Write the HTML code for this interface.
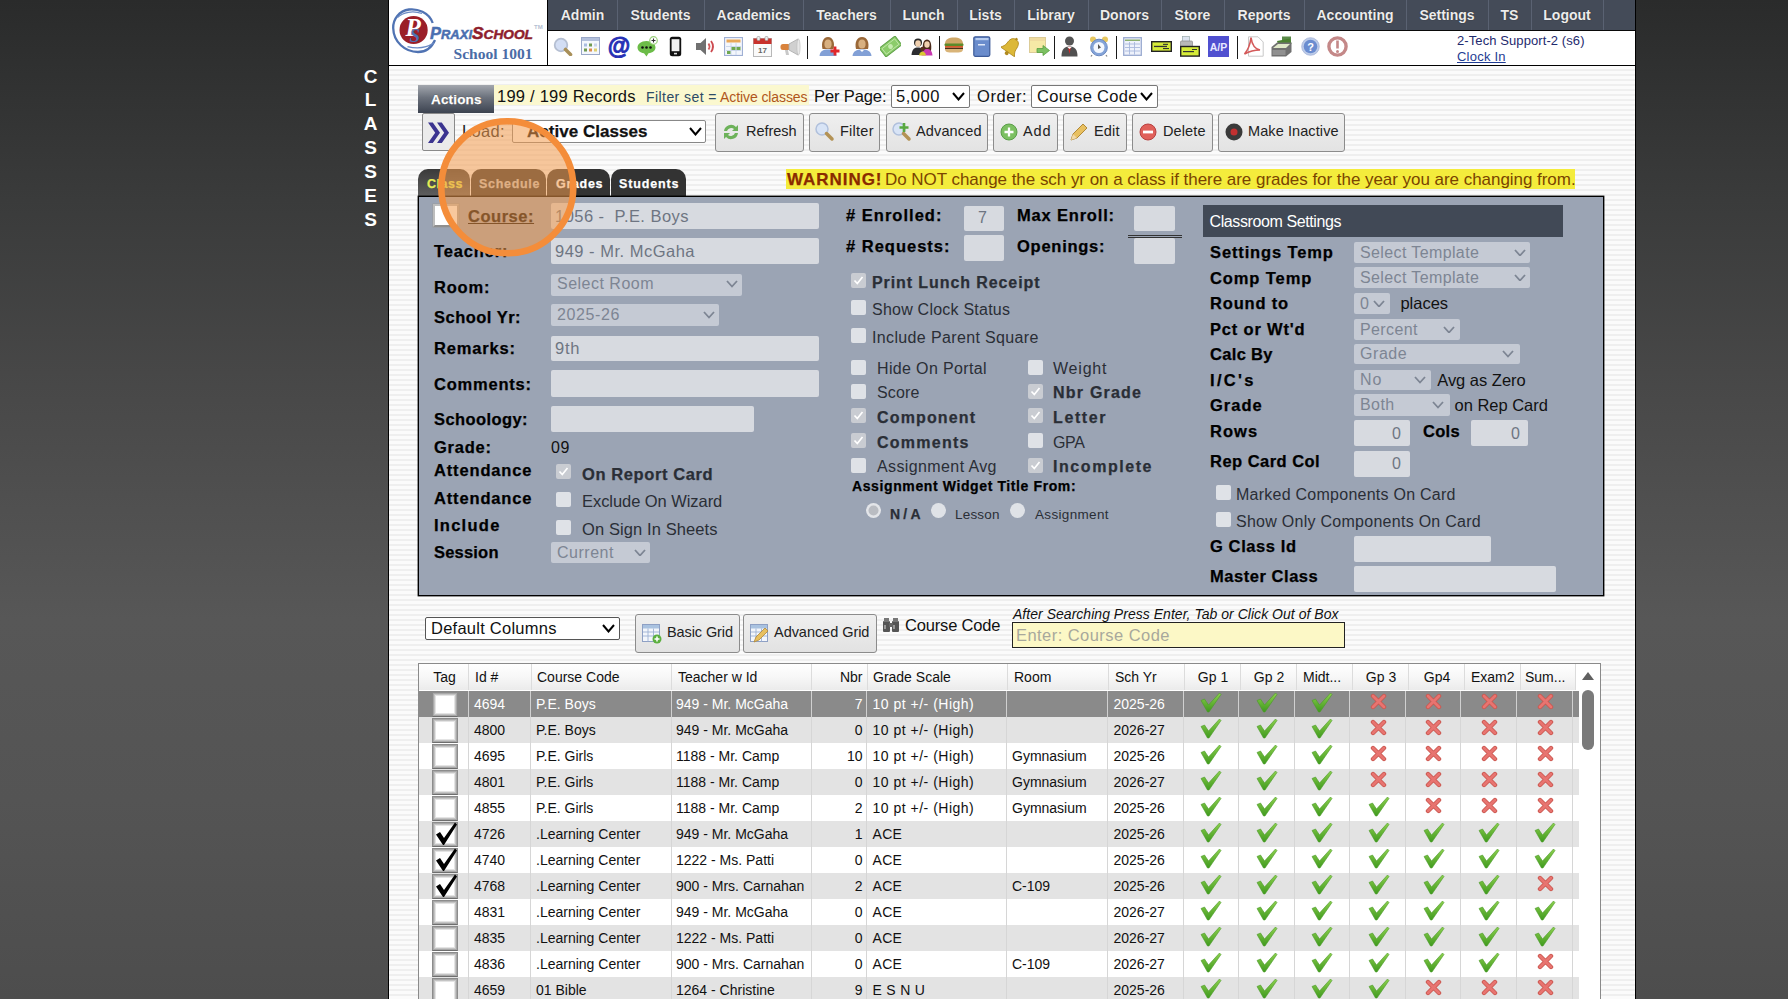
<!DOCTYPE html><html><head><meta charset="utf-8"><style>html,body{margin:0;padding:0;}body{width:1788px;height:999px;overflow:hidden;position:relative;background:linear-gradient(to bottom,#2a2b2b 0px,#3a3b3b 200px,#494949 400px,#575757 620px,#545454 800px,#4d4d4d 999px);font-family:'Liberation Sans', sans-serif;}</style></head><body>
<div style="position:absolute;left:388px;top:0px;width:1248px;height:999px;background:#000;"></div>
<div style="position:absolute;left:389px;top:66px;width:1246px;height:933px;background:repeating-linear-gradient(to bottom,#fbfbfb 0px,#fbfbfb 3px,#efefef 3px,#efefef 5px);"></div>
<div style="position:absolute;left:389px;top:0px;width:158px;height:65px;background:#fff;"></div>
<div style="position:absolute;left:547px;top:0px;width:1px;height:65px;background:#000;"></div>
<div style="position:absolute;left:548px;top:0px;width:1087px;height:30px;background:#444b58;"></div>
<div style="position:absolute;left:548px;top:30px;width:1087px;height:1px;background:#0a0a0a;"></div>
<div style="position:absolute;left:548px;top:31px;width:1087px;height:34px;background:#fff;"></div>
<div style="position:absolute;left:389px;top:65px;width:1246px;height:1px;background:#000;"></div>
<div style="position:absolute;left:355px;top:63.5px;width:31px;text-align:center;font:bold 19px/26px 'Liberation Sans', sans-serif;color:#fff;">C</div>
<div style="position:absolute;left:355px;top:87.3px;width:31px;text-align:center;font:bold 19px/26px 'Liberation Sans', sans-serif;color:#fff;">L</div>
<div style="position:absolute;left:355px;top:111.2px;width:31px;text-align:center;font:bold 19px/26px 'Liberation Sans', sans-serif;color:#fff;">A</div>
<div style="position:absolute;left:355px;top:135.0px;width:31px;text-align:center;font:bold 19px/26px 'Liberation Sans', sans-serif;color:#fff;">S</div>
<div style="position:absolute;left:355px;top:158.8px;width:31px;text-align:center;font:bold 19px/26px 'Liberation Sans', sans-serif;color:#fff;">S</div>
<div style="position:absolute;left:355px;top:182.6px;width:31px;text-align:center;font:bold 19px/26px 'Liberation Sans', sans-serif;color:#fff;">E</div>
<div style="position:absolute;left:355px;top:206.5px;width:31px;text-align:center;font:bold 19px/26px 'Liberation Sans', sans-serif;color:#fff;">S</div>
<div style="position:absolute;left:548px;top:0;width:69px;height:30px;text-align:center;font:bold 14px/30px 'Liberation Sans', sans-serif;color:#ececec;text-shadow:0 0 1px #222;">Admin</div>
<div style="position:absolute;left:617px;top:0px;width:1px;height:30px;background:#5a6272;"></div>
<div style="position:absolute;left:617px;top:0;width:87px;height:30px;text-align:center;font:bold 14px/30px 'Liberation Sans', sans-serif;color:#ececec;text-shadow:0 0 1px #222;">Students</div>
<div style="position:absolute;left:704px;top:0px;width:1px;height:30px;background:#5a6272;"></div>
<div style="position:absolute;left:704px;top:0;width:99px;height:30px;text-align:center;font:bold 14px/30px 'Liberation Sans', sans-serif;color:#ececec;text-shadow:0 0 1px #222;">Academics</div>
<div style="position:absolute;left:803px;top:0px;width:1px;height:30px;background:#5a6272;"></div>
<div style="position:absolute;left:803px;top:0;width:87px;height:30px;text-align:center;font:bold 14px/30px 'Liberation Sans', sans-serif;color:#ececec;text-shadow:0 0 1px #222;">Teachers</div>
<div style="position:absolute;left:890px;top:0px;width:1px;height:30px;background:#5a6272;"></div>
<div style="position:absolute;left:890px;top:0;width:67px;height:30px;text-align:center;font:bold 14px/30px 'Liberation Sans', sans-serif;color:#ececec;text-shadow:0 0 1px #222;">Lunch</div>
<div style="position:absolute;left:957px;top:0px;width:1px;height:30px;background:#5a6272;"></div>
<div style="position:absolute;left:957px;top:0;width:57px;height:30px;text-align:center;font:bold 14px/30px 'Liberation Sans', sans-serif;color:#ececec;text-shadow:0 0 1px #222;">Lists</div>
<div style="position:absolute;left:1014px;top:0px;width:1px;height:30px;background:#5a6272;"></div>
<div style="position:absolute;left:1014px;top:0;width:74px;height:30px;text-align:center;font:bold 14px/30px 'Liberation Sans', sans-serif;color:#ececec;text-shadow:0 0 1px #222;">Library</div>
<div style="position:absolute;left:1088px;top:0px;width:1px;height:30px;background:#5a6272;"></div>
<div style="position:absolute;left:1088px;top:0;width:73px;height:30px;text-align:center;font:bold 14px/30px 'Liberation Sans', sans-serif;color:#ececec;text-shadow:0 0 1px #222;">Donors</div>
<div style="position:absolute;left:1161px;top:0px;width:1px;height:30px;background:#5a6272;"></div>
<div style="position:absolute;left:1161px;top:0;width:63px;height:30px;text-align:center;font:bold 14px/30px 'Liberation Sans', sans-serif;color:#ececec;text-shadow:0 0 1px #222;">Store</div>
<div style="position:absolute;left:1224px;top:0px;width:1px;height:30px;background:#5a6272;"></div>
<div style="position:absolute;left:1224px;top:0;width:80px;height:30px;text-align:center;font:bold 14px/30px 'Liberation Sans', sans-serif;color:#ececec;text-shadow:0 0 1px #222;">Reports</div>
<div style="position:absolute;left:1304px;top:0px;width:1px;height:30px;background:#5a6272;"></div>
<div style="position:absolute;left:1304px;top:0;width:102px;height:30px;text-align:center;font:bold 14px/30px 'Liberation Sans', sans-serif;color:#ececec;text-shadow:0 0 1px #222;">Accounting</div>
<div style="position:absolute;left:1406px;top:0px;width:1px;height:30px;background:#5a6272;"></div>
<div style="position:absolute;left:1406px;top:0;width:82px;height:30px;text-align:center;font:bold 14px/30px 'Liberation Sans', sans-serif;color:#ececec;text-shadow:0 0 1px #222;">Settings</div>
<div style="position:absolute;left:1488px;top:0px;width:1px;height:30px;background:#5a6272;"></div>
<div style="position:absolute;left:1488px;top:0;width:43px;height:30px;text-align:center;font:bold 14px/30px 'Liberation Sans', sans-serif;color:#ececec;text-shadow:0 0 1px #222;">TS</div>
<div style="position:absolute;left:1531px;top:0px;width:1px;height:30px;background:#5a6272;"></div>
<div style="position:absolute;left:1531px;top:0;width:72px;height:30px;text-align:center;font:bold 14px/30px 'Liberation Sans', sans-serif;color:#ececec;text-shadow:0 0 1px #222;">Logout</div>
<div style="position:absolute;left:1603px;top:0px;width:1px;height:30px;background:#5a6272;"></div>
<svg style="position:absolute;left:389px;top:0px;" width="158" height="65" viewBox="0 0 158 65">
<path d="M 43.7 23 C 40 12, 28 8.5, 20 9.5 C 10 11, 4 19, 4.2 28 C 4.5 42, 16 52, 29 52 C 37 52, 43 47, 46 40" fill="none" stroke="#5073b3" stroke-width="2.3"/>
<path d="M 8.4 17.5 C 14 12, 24 10.5, 33 13.5" fill="none" stroke="#6a8ac4" stroke-width="1.3"/>
<path d="M 18.5 46.6 C 28 49, 38 47.5, 44.8 43.2" fill="none" stroke="#6a8ac4" stroke-width="1.4"/>
<circle cx="24.6" cy="30" r="14.1" fill="#9b1f28"/>
<text x="16.5" y="35.5" font-family="Liberation Serif" font-style="italic" font-weight="bold" font-size="25" fill="#fff">P</text>
<text x="20.5" y="41.5" font-family="Liberation Serif" font-style="italic" font-weight="bold" font-size="19" fill="#4f72b3">S</text>
<text x="41" y="38.5" font-family="Liberation Sans" font-style="italic" font-weight="bold" font-size="16.5" fill="#4a6fb0" stroke="#4a6fb0" stroke-width="0.5" textLength="42" lengthAdjust="spacingAndGlyphs">P<tspan font-size="13">RAXI</tspan></text>
<text x="83" y="38.5" font-family="Liberation Sans" font-style="italic" font-weight="bold" font-size="16.5" fill="#8e1d2c" stroke="#8e1d2c" stroke-width="0.5" textLength="61" lengthAdjust="spacingAndGlyphs">S<tspan font-size="13">CHOOL</tspan></text>
<text x="145" y="29" font-family="Liberation Sans" font-weight="bold" font-size="6" fill="#b4c0d2">TM</text>
<text x="64.5" y="59" font-family="Liberation Serif" font-weight="bold" font-size="14.5" fill="#4b6ca6" textLength="79" lengthAdjust="spacingAndGlyphs">School 1001</text>
</svg>
<svg style="position:absolute;left:553px;top:37px;" width="20" height="19" viewBox="0 0 20 19"><circle cx="8" cy="8" r="6.3" fill="#d3def4" stroke="#b5bfd2" stroke-width="1.8"/><path d="M12.5 12.5 L17.5 17.5" stroke="#a88f58" stroke-width="3.6" stroke-linecap="round"/></svg>
<svg style="position:absolute;left:581px;top:37px;" width="19" height="19" viewBox="0 0 19 19"><rect x="0.5" y="0.5" width="18" height="17" fill="#f4f7fc" stroke="#9aa8c8"/><rect x="1" y="1" width="17" height="3" fill="#b3c0dc"/><rect x="3" y="6.5" width="3" height="3" fill="#a9bde0"/><rect x="8" y="6.5" width="3" height="3" fill="#6f9a50"/><rect x="13" y="6.5" width="3" height="3" fill="#c9d3ea"/><rect x="3" y="11.5" width="3" height="3" fill="#6f9a50"/><rect x="8" y="11.5" width="3" height="3" fill="#dc8c50"/><rect x="13" y="11.5" width="3" height="3" fill="#dcd070"/></svg>
<svg style="position:absolute;left:608px;top:35px;" width="22" height="23" viewBox="0 0 22 23"><text x="11" y="18.5" text-anchor="middle" font-family="Liberation Sans" font-weight="bold" font-size="23" fill="#2630b5" stroke="#2630b5" stroke-width="0.9">@</text></svg>
<svg style="position:absolute;left:637px;top:36px;" width="21" height="21" viewBox="0 0 21 21"><path d="M9.5 5 C4 5 0.5 8 0.5 11.5 C0.5 14.5 3 16.5 7 17.2 L9.5 20.5 L11.5 17.2 C16 16.8 18.5 14.5 18.5 11.5 C18.5 8 15 5 9.5 5z" fill="#6cbc48"/><circle cx="5.5" cy="11.5" r="1.3" fill="#111"/><circle cx="9.5" cy="11.5" r="1.3" fill="#111"/><circle cx="13.5" cy="11.5" r="1.3" fill="#111"/><circle cx="16.5" cy="4.5" r="3.8" fill="#fff" stroke="#9ad07a" stroke-width="1.2"/><path d="M16.5 2.5v4M14.5 4.5h4" stroke="#333" stroke-width="1.1"/></svg>
<svg style="position:absolute;left:669px;top:36px;" width="13" height="21" viewBox="0 0 13 21"><rect x="0.8" y="0.8" width="11.4" height="19.4" rx="2.5" fill="#111"/><rect x="2.6" y="3.2" width="7.8" height="12" fill="#f2f2f2"/><rect x="5" y="16.8" width="3" height="1.6" fill="#ddd"/></svg>
<svg style="position:absolute;left:695px;top:37px;" width="22" height="19" viewBox="0 0 22 19"><path d="M1 6h4.5L11 1v17L5.5 13H1z" fill="#707070"/><path d="M13.5 6.5 q2 3 0 6" fill="none" stroke="#d05a5a" stroke-width="1.8"/><path d="M16 4 q4 5.5 0 11" fill="none" stroke="#cc4a50" stroke-width="1.8"/></svg>
<svg style="position:absolute;left:724px;top:37px;" width="19" height="19" viewBox="0 0 19 19"><rect x="0.5" y="0.5" width="18" height="18" fill="#f4f7fc" stroke="#9fb0d4" stroke-width="1.2"/><rect x="2.5" y="2.5" width="14" height="3" fill="#e9a858"/><path d="M2 9.5h15M2 13.5h15M7 6v12M12 6v12" stroke="#c8d4ea" stroke-width="0.9"/><rect x="7.5" y="10" width="4" height="3" fill="#6fa850"/><rect x="3" y="14" width="3.5" height="3" fill="#6fa850"/><rect x="12.5" y="10" width="4" height="3" fill="#6fa850"/></svg>
<svg style="position:absolute;left:753px;top:36px;" width="19" height="21" viewBox="0 0 19 21"><rect x="0.5" y="2.5" width="18" height="18" fill="#fafafa" stroke="#b8b8b8"/><rect x="0.5" y="2.5" width="18" height="5.5" fill="#c8322c"/><rect x="4" y="0.5" width="3" height="4" rx="1" fill="#eee" stroke="#999" stroke-width="0.6"/><rect x="12" y="0.5" width="3" height="4" rx="1" fill="#eee" stroke="#999" stroke-width="0.6"/><text x="9.5" y="17" text-anchor="middle" font-family="Liberation Sans" font-weight="bold" font-size="8" fill="#666">17</text></svg>
<svg style="position:absolute;left:780px;top:38px;" width="21" height="19" viewBox="0 0 21 19"><rect x="0.5" y="6" width="10" height="6" rx="2.5" fill="#d9833c"/><path d="M9 6 L18 1 Q20.5 9 18 17 L9 12z" fill="#d0d0d0" stroke="#aaa" stroke-width="0.8"/><ellipse cx="18.5" cy="9" rx="1.6" ry="8" fill="#e8e8e8" stroke="#bbb" stroke-width="0.6"/><path d="M5 12 L6 17 L9 17 L8 12z" fill="#c8c8c8"/></svg>
<svg style="position:absolute;left:819px;top:36px;" width="21" height="21" viewBox="0 0 21 21"><path d="M3.5 13 C2 7 4 1 9 1 C14 1 16 7 14.5 13z" fill="#9a6838"/><ellipse cx="9" cy="8" rx="3.6" ry="4.5" fill="#d8b080"/><path d="M0.5 20 C1 15 4 13.5 9 13.5 C14 13.5 17 15 17.5 20z" fill="#82a0d6"/><path d="M16 10.5v9M11.5 15h9" stroke="#e0262a" stroke-width="2.8"/></svg>
<svg style="position:absolute;left:852px;top:36px;" width="20" height="21" viewBox="0 0 20 21"><path d="M4 13 C2.5 7 4.5 1 10 1 C15.5 1 17.5 7 16 13z" fill="#9a6838"/><ellipse cx="10" cy="8" rx="3.6" ry="4.5" fill="#d8b080"/><path d="M0.5 20 C1 15 4.5 13.5 10 13.5 C15.5 13.5 19 15 19.5 20z" fill="#82a0d6"/><path d="M8 14 L10 16 L12 14" fill="#fff"/></svg>
<svg style="position:absolute;left:880px;top:36px;" width="21" height="21" viewBox="0 0 21 21"><g transform="rotate(-38 10.5 10.5)"><rect x="0.5" y="5" width="20" height="11" fill="#8ccc6a" stroke="#5fa048" stroke-width="1"/><rect x="2.5" y="7" width="16" height="7" fill="none" stroke="#c6eab0" stroke-width="0.8"/><circle cx="10.5" cy="10.5" r="2.4" fill="#c6eab0"/></g></svg>
<svg style="position:absolute;left:911px;top:37px;" width="22" height="19" viewBox="0 0 22 19"><circle cx="7" cy="5.5" r="4" fill="#2a2a2a"/><ellipse cx="7" cy="6.5" rx="2.8" ry="3.2" fill="#f0d0b0"/><path d="M0.5 18 C1 12 3.5 10.5 7 10.5 C10 10.5 12 12 12.5 18z" fill="#2c2c30"/><path d="M12 14 C11 6 13 2.5 16 2.5 C19 2.5 21 6 20 14z" fill="#4a2a1a"/><ellipse cx="16" cy="7.5" rx="2.7" ry="3.2" fill="#f0d0b0"/><path d="M10.5 18.5 C11 13.5 13 12 16 12 C19 12 21 13.5 21.5 18.5z" fill="#c838b0"/><circle cx="11.5" cy="12" r="2.2" fill="#5a3020"/><path d="M8 18.5 C8.5 15.5 10 14.5 11.5 14.5 C13 14.5 14.5 15.5 15 18.5z" fill="#d8c830"/></svg>
<svg style="position:absolute;left:944px;top:37px;" width="20" height="16" viewBox="0 0 20 16"><path d="M1 7 C1 2 5 0.5 10 0.5 C15 0.5 19 2 19 7z" fill="#cfa868"/><rect x="0.5" y="6.5" width="19" height="2.5" rx="1" fill="#5c8a2a"/><rect x="1" y="9" width="18" height="1.8" fill="#d85a2a"/><rect x="1" y="10.8" width="18" height="1.6" fill="#4a3018"/><path d="M1 12 H19 C19 15 17 15.5 10 15.5 C3 15.5 1 15 1 12z" fill="#d9b478"/></svg>
<svg style="position:absolute;left:973px;top:36px;" width="18" height="21" viewBox="0 0 18 21"><rect x="0.8" y="0.8" width="16" height="19.5" rx="1.5" fill="#6a8ccc" stroke="#3c5a98" stroke-width="1.2"/><rect x="2.5" y="2" width="13" height="2.2" fill="#b8cdf0"/><rect x="5" y="8" width="7" height="1.5" fill="#dfe8f8"/></svg>
<svg style="position:absolute;left:1001px;top:36px;" width="20" height="21" viewBox="0 0 20 21"><g transform="rotate(35 10 11)"><path d="M10 2 C5.5 2 4.5 6 4.5 10 C4.5 13 3 15 1.5 17 H18.5 C17 15 15.5 13 15.5 10 C15.5 6 14.5 2 10 2z" fill="#dcb838" stroke="#b08a20" stroke-width="0.8"/><circle cx="10" cy="18.5" r="2" fill="#b08a20"/><circle cx="10" cy="1.5" r="1.3" fill="#b08a20"/></g></svg>
<svg style="position:absolute;left:1029px;top:37px;" width="21" height="20" viewBox="0 0 21 20"><rect x="0.5" y="0.5" width="16" height="15" fill="#f6e9a6" stroke="#d9c891" stroke-width="0.9"/><rect x="1" y="1" width="15" height="3" fill="#f0dca0"/><path d="M8 11.5h6v-3l6.5 5-6.5 5v-3h-6z" fill="#7cc062" stroke="#58a040" stroke-width="0.8"/></svg>
<svg style="position:absolute;left:1061px;top:36px;" width="17" height="21" viewBox="0 0 17 21"><circle cx="8.5" cy="5" r="4.5" fill="#555"/><path d="M0.5 20.5 C0.5 13 3.5 10.5 8.5 10.5 C13.5 10.5 16.5 13 16.5 20.5z" fill="#505050"/><path d="M7 10.8 L8.5 18 L10 10.8z" fill="#d02828"/><path d="M6 10.8 L8.5 13 L11 10.8" fill="#fff"/></svg>
<svg style="position:absolute;left:1089px;top:36px;" width="20" height="21" viewBox="0 0 20 21"><circle cx="4" cy="3.5" r="3" fill="#e8c860"/><circle cx="16" cy="3.5" r="3" fill="#e8c860"/><circle cx="10" cy="11.5" r="8.3" fill="#84a4d8" stroke="#6a88c0" stroke-width="1"/><circle cx="10" cy="11.5" r="5.5" fill="#f4f8ff"/><path d="M9 8 L12 11.5 L9 13z" fill="#555"/><path d="M3 19 L2 20.5 M17 19 L18 20.5" stroke="#888" stroke-width="1.3"/></svg>
<svg style="position:absolute;left:1123px;top:37px;" width="19" height="19" viewBox="0 0 19 19"><rect x="0.7" y="0.7" width="17.6" height="17.6" fill="#eef2fb" stroke="#9aaad0" stroke-width="1.3"/><rect x="2" y="2.5" width="15" height="1.5" fill="#8cb070"/><path d="M2 7h15M2 10.5h15M2 14h15M6.5 5v12.5M11.5 5v12.5" stroke="#a8b8dc" stroke-width="0.9"/></svg>
<svg style="position:absolute;left:1151px;top:41px;" width="21" height="11" viewBox="0 0 21 11"><rect x="0.7" y="0.7" width="19.6" height="9.6" fill="#d6ec38" stroke="#222" stroke-width="1.4"/><rect x="3" y="4.8" width="13" height="1.3" fill="#333"/><rect x="12" y="2.8" width="5" height="1.1" fill="#333"/><rect x="12" y="7" width="6" height="1.1" fill="#333"/></svg>
<svg style="position:absolute;left:1180px;top:36px;" width="20" height="21" viewBox="0 0 20 21"><rect x="2.5" y="0.5" width="7" height="6" fill="#dde4f0" stroke="#9aa" stroke-width="0.7"/><rect x="0.5" y="5" width="12" height="8" rx="1" fill="#b8b8b8" stroke="#888" stroke-width="0.7"/><rect x="0.7" y="10.5" width="18.6" height="9.6" fill="#d6ec38" stroke="#222" stroke-width="1.4"/><rect x="3" y="15" width="11" height="1.2" fill="#333"/><rect x="12" y="13" width="5" height="1" fill="#333"/></svg>
<svg style="position:absolute;left:1208px;top:36px;" width="21" height="21" viewBox="0 0 21 21"><rect x="0" y="0" width="21" height="21" fill="#5050d0"/><text x="10.5" y="15" text-anchor="middle" font-family="Liberation Sans" font-weight="bold" font-size="10.5" fill="#e8e8ff">A/P</text></svg>
<svg style="position:absolute;left:1243px;top:36px;" width="21" height="21" viewBox="0 0 21 21"><path d="M5.5 0.8 H15 L20.2 6 V20.2 H5.5z" fill="#fff" stroke="#c8c8c8" stroke-width="1"/><path d="M1.5 18 C5 14 7 10 8 1.5 C9 9 12 13 17 14 C11 14 6 15.5 1.5 18z" fill="none" stroke="#d45a5a" stroke-width="1.6"/></svg>
<svg style="position:absolute;left:1271px;top:36px;" width="21" height="21" viewBox="0 0 21 21"><rect x="11" y="0.5" width="9" height="6" fill="#5a8a4a"/><path d="M6 5 L19 2.5 L20.5 8 L7.5 10z" fill="#4a8030"/><path d="M0.5 11 L6 6.5 H20.5 V16 L15 20.5 H0.5z" fill="#707070"/><path d="M2 12 L7 8 H19 L15 12z" fill="#dfe8c8"/><rect x="1.5" y="14" width="13" height="5" fill="#909090"/></svg>
<svg style="position:absolute;left:1301px;top:37px;" width="19" height="19" viewBox="0 0 19 19"><circle cx="9.5" cy="9.5" r="8.8" fill="#bccbe8" stroke="#a4b4d8" stroke-width="0.8"/><circle cx="9.5" cy="9.5" r="6.8" fill="#6a8cd0"/><text x="9.5" y="13.5" text-anchor="middle" font-family="Liberation Sans" font-weight="bold" font-size="11" fill="#fff">?</text></svg>
<svg style="position:absolute;left:1327px;top:36px;" width="21" height="21" viewBox="0 0 21 21"><circle cx="10.5" cy="10.5" r="8.6" fill="#fff" stroke="#c48888" stroke-width="3.4"/><rect x="9.2" y="4.5" width="2.6" height="8" fill="#c48888"/><circle cx="10.5" cy="15.5" r="1.5" fill="#c48888"/></svg>
<div style="position:absolute;left:939px;top:36px;width:1px;height:23px;background:#1a1a1a;"></div>
<div style="position:absolute;left:1054px;top:36px;width:1px;height:23px;background:#1a1a1a;"></div>
<div style="position:absolute;left:1116px;top:36px;width:1px;height:23px;background:#1a1a1a;"></div>
<div style="position:absolute;left:1237px;top:36px;width:1px;height:23px;background:#1a1a1a;"></div>
<div style="position:absolute;left:807px;top:36px;width:1px;height:23px;background:#1a1a1a;"></div>
<div id="t0" style="position:absolute;left:1457px;top:32.5px;white-space:nowrap;font:normal 13px/16px 'Liberation Sans', sans-serif;color:#1e2a6e;letter-spacing:0.09px;">2-Tech Support-2 (s6)</div>
<div id="t1" style="position:absolute;left:1457px;top:48.5px;white-space:nowrap;font:normal 13px/16px 'Liberation Sans', sans-serif;color:#1f3c93;letter-spacing:0.22px;text-decoration:underline;">Clock In</div>
<div style="position:absolute;left:418px;top:85px;width:76px;height:28px;background:linear-gradient(to bottom,#a3a7ae 0%,#6b717c 45%,#3c4350 100%);"></div>
<div id="t2" style="position:absolute;left:431px;top:91.0px;white-space:nowrap;font:bold 13.5px/17px 'Liberation Sans', sans-serif;color:#fff;letter-spacing:0.16px;-webkit-text-stroke:0.25px currentColor;text-shadow:0 0 1px #222;">Actions</div>
<div style="position:absolute;left:494px;top:85px;width:315px;height:20px;background:#fbf8cf;"></div>
<div id="t3" style="position:absolute;left:497px;top:85.5px;white-space:nowrap;font:normal 16.5px/21px 'Liberation Sans', sans-serif;color:#111;letter-spacing:0.23px;">199 / 199 Records</div>
<div id="t4" style="position:absolute;left:646px;top:87.5px;white-space:nowrap;font:normal 14px/18px 'Liberation Sans', sans-serif;color:#2c4a66;letter-spacing:0.43px;">Filter set =</div>
<div id="t5" style="position:absolute;left:720px;top:87.5px;white-space:nowrap;font:normal 14px/18px 'Liberation Sans', sans-serif;color:#b0561c;letter-spacing:-0.09px;">Active classes</div>
<div id="t6" style="position:absolute;left:814px;top:85.5px;white-space:nowrap;font:normal 16.5px/21px 'Liberation Sans', sans-serif;color:#111;letter-spacing:-0.11px;">Per Page:</div>
<div style="position:absolute;left:891px;top:85px;width:79px;height:23px;box-sizing:border-box;background:#fff;border:1px solid #777;border-radius:2px;"></div>
<div id="t7" style="position:absolute;left:896px;top:86.0px;white-space:nowrap;font:normal 16.5px/21px 'Liberation Sans', sans-serif;color:#111;letter-spacing:0.55px;">5,000</div>
<svg style="position:absolute;left:952px;top:92px" width="13" height="8.5"><path d="M1 1 L6.5 7.5 L12 1" fill="none" stroke="#000" stroke-width="2"/></svg>
<div id="t8" style="position:absolute;left:977px;top:85.5px;white-space:nowrap;font:normal 16.5px/21px 'Liberation Sans', sans-serif;color:#111;letter-spacing:0.55px;">Order:</div>
<div style="position:absolute;left:1031px;top:85px;width:127px;height:23px;box-sizing:border-box;background:#fff;border:1px solid #777;border-radius:2px;"></div>
<div id="t9" style="position:absolute;left:1037px;top:86.0px;white-space:nowrap;font:normal 16.5px/21px 'Liberation Sans', sans-serif;color:#111;letter-spacing:0.33px;">Course Code</div>
<svg style="position:absolute;left:1140px;top:92px" width="13" height="8.5"><path d="M1 1 L6.5 7.5 L12 1" fill="none" stroke="#000" stroke-width="2"/></svg>
<div style="position:absolute;left:422px;top:113px;width:33px;height:38px;box-sizing:border-box;background:#ebebeb;border:1px solid #8a8a8a;border-radius:2px;"></div>
<svg style="position:absolute;left:427px;top:121px;" width="26" height="24" viewBox="0 0 26 24"><path d="M1 1.5 L5.8 1.5 L13 11.8 L5.8 22 L1 22 L8.2 11.8z" fill="#3b3490"/><path d="M10 1.5 L14.8 1.5 L22 11.8 L14.8 22 L10 22 L17.2 11.8z" fill="#3b3490"/></svg>
<div id="t10" style="position:absolute;left:462px;top:120.5px;white-space:nowrap;font:normal 16.5px/21px 'Liberation Sans', sans-serif;color:#222;letter-spacing:0.30px;">Load:</div>
<div style="position:absolute;left:512px;top:120px;width:194px;height:23px;box-sizing:border-box;background:#fff;border:1px solid #888;border-radius:2px;"></div>
<div id="t11" style="position:absolute;left:527px;top:121.0px;white-space:nowrap;font:bold 17px/21px 'Liberation Sans', sans-serif;color:#111;letter-spacing:0.04px;-webkit-text-stroke:0.25px currentColor;">Active Classes</div>
<svg style="position:absolute;left:689px;top:127px" width="13" height="8.5"><path d="M1 1 L6.5 7.5 L12 1" fill="none" stroke="#000" stroke-width="2"/></svg>
<div style="position:absolute;left:715px;top:113px;width:89px;height:39px;box-sizing:border-box;background:linear-gradient(#efefef,#e3e3e3);border:1px solid #8c8c8c;border-radius:3px;"></div>
<div id="t12" style="position:absolute;left:746px;top:122.0px;white-space:nowrap;font:normal 14.5px/18px 'Liberation Sans', sans-serif;color:#222;letter-spacing:-0.05px;">Refresh</div>
<svg style="position:absolute;left:720px;top:121px;" width="22" height="22" viewBox="0 0 22 22"><path d="M4 10 a7 7 0 0 1 12-4 l2-2 v6 h-6 l2-2 a4.5 4.5 0 0 0-7 2z" fill="#6db25a"/><path d="M18 12 a7 7 0 0 1-12 4 l-2 2 v-6 h6 l-2 2 a4.5 4.5 0 0 0 7-2z" fill="#6db25a"/></svg>
<div style="position:absolute;left:809px;top:113px;width:71px;height:39px;box-sizing:border-box;background:linear-gradient(#efefef,#e3e3e3);border:1px solid #8c8c8c;border-radius:3px;"></div>
<div id="t13" style="position:absolute;left:840px;top:122.0px;white-space:nowrap;font:normal 14.5px/18px 'Liberation Sans', sans-serif;color:#222;letter-spacing:0.25px;">Filter</div>
<svg style="position:absolute;left:814px;top:121px;" width="22" height="22" viewBox="0 0 22 22"><circle cx="8" cy="8" r="6" fill="#d8e4f6" stroke="#b0c0dc" stroke-width="1.5"/><path d="M12.5 12.5 L18 18" stroke="#b39255" stroke-width="3.5" stroke-linecap="round"/></svg>
<div style="position:absolute;left:886px;top:113px;width:102px;height:39px;box-sizing:border-box;background:linear-gradient(#efefef,#e3e3e3);border:1px solid #8c8c8c;border-radius:3px;"></div>
<div id="t14" style="position:absolute;left:916px;top:122.0px;white-space:nowrap;font:normal 14.5px/18px 'Liberation Sans', sans-serif;color:#222;letter-spacing:0.14px;">Advanced</div>
<svg style="position:absolute;left:891px;top:121px;" width="22" height="22" viewBox="0 0 22 22"><circle cx="8" cy="8" r="6" fill="#d8e4f6" stroke="#b0c0dc" stroke-width="1.5"/><path d="M12.5 12.5 L18 18" stroke="#b39255" stroke-width="3.5" stroke-linecap="round"/><path d="M13 2v9M8.5 6.5h9" stroke="#58a840" stroke-width="2.6"/></svg>
<div style="position:absolute;left:993px;top:113px;width:65px;height:39px;box-sizing:border-box;background:linear-gradient(#efefef,#e3e3e3);border:1px solid #8c8c8c;border-radius:3px;"></div>
<div id="t15" style="position:absolute;left:1023px;top:122.0px;white-space:nowrap;font:normal 14.5px/18px 'Liberation Sans', sans-serif;color:#222;letter-spacing:0.84px;">Add</div>
<svg style="position:absolute;left:999px;top:122px;" width="22" height="22" viewBox="0 0 22 22"><circle cx="10" cy="10" r="8" fill="#7cc062" stroke="#5a9e48"/><path d="M10 5.5v9M5.5 10h9" stroke="#fff" stroke-width="2.3"/></svg>
<div style="position:absolute;left:1063px;top:113px;width:64px;height:39px;box-sizing:border-box;background:linear-gradient(#efefef,#e3e3e3);border:1px solid #8c8c8c;border-radius:3px;"></div>
<div id="t16" style="position:absolute;left:1094px;top:122.0px;white-space:nowrap;font:normal 14.5px/18px 'Liberation Sans', sans-serif;color:#222;letter-spacing:0.17px;">Edit</div>
<svg style="position:absolute;left:1068px;top:121px;" width="22" height="22" viewBox="0 0 22 22"><path d="M3 19 L5 13 L15 3 L19 7 L9 17z" fill="#e8c060" stroke="#b08838" stroke-width="1"/><path d="M3 19 L5 13 L9 17z" fill="#f0d8a8"/></svg>
<div style="position:absolute;left:1132px;top:113px;width:81px;height:39px;box-sizing:border-box;background:linear-gradient(#efefef,#e3e3e3);border:1px solid #8c8c8c;border-radius:3px;"></div>
<div id="t17" style="position:absolute;left:1163px;top:122.0px;white-space:nowrap;font:normal 14.5px/18px 'Liberation Sans', sans-serif;color:#222;letter-spacing:0.12px;">Delete</div>
<svg style="position:absolute;left:1138px;top:122px;" width="22" height="22" viewBox="0 0 22 22"><circle cx="10" cy="10" r="8" fill="#e0605a" stroke="#b84040"/><rect x="5" y="8.6" width="10" height="2.8" fill="#fff"/></svg>
<div style="position:absolute;left:1218px;top:113px;width:127px;height:39px;box-sizing:border-box;background:linear-gradient(#efefef,#e3e3e3);border:1px solid #8c8c8c;border-radius:3px;"></div>
<div id="t18" style="position:absolute;left:1248px;top:122.0px;white-space:nowrap;font:normal 14.5px/18px 'Liberation Sans', sans-serif;color:#222;letter-spacing:0.09px;">Make Inactive</div>
<svg style="position:absolute;left:1224px;top:122px;" width="22" height="22" viewBox="0 0 22 22"><circle cx="10" cy="10" r="8.5" fill="#3a3a3a"/><circle cx="10" cy="10" r="3.5" fill="#c23030"/></svg>
<div style="position:absolute;left:418px;top:169px;width:52px;height:27px;background:linear-gradient(to bottom,#3a3a3a,#5e5e5e);border-radius:10px 10px 0 0;"></div>
<div id="t19" style="position:absolute;left:427px;top:175.5px;white-space:nowrap;font:bold 12.5px/16px 'Liberation Sans', sans-serif;color:#e6ee55;letter-spacing:0.54px;-webkit-text-stroke:0.25px currentColor;">Class</div>
<div style="position:absolute;left:471px;top:169px;width:75px;height:27px;background:#333;border-radius:10px 10px 0 0;"></div>
<div id="t20" style="position:absolute;left:479px;top:175.5px;white-space:nowrap;font:bold 12.5px/16px 'Liberation Sans', sans-serif;color:#c8c8c8;letter-spacing:0.70px;-webkit-text-stroke:0.25px currentColor;">Schedule</div>
<div style="position:absolute;left:547px;top:169px;width:63px;height:27px;background:#333;border-radius:10px 10px 0 0;"></div>
<div id="t21" style="position:absolute;left:556px;top:175.5px;white-space:nowrap;font:bold 12.5px/16px 'Liberation Sans', sans-serif;color:#fff;letter-spacing:0.68px;-webkit-text-stroke:0.25px currentColor;">Grades</div>
<div style="position:absolute;left:611px;top:169px;width:75px;height:27px;background:#333;border-radius:10px 10px 0 0;"></div>
<div id="t22" style="position:absolute;left:619px;top:175.5px;white-space:nowrap;font:bold 12.5px/16px 'Liberation Sans', sans-serif;color:#fff;letter-spacing:0.86px;-webkit-text-stroke:0.25px currentColor;">Students</div>
<div style="position:absolute;left:786px;top:169px;width:789px;height:20px;background:#f4ec3c;"></div>
<div id="t23" style="position:absolute;left:787px;top:169.0px;white-space:nowrap;font:bold 17px/21px 'Liberation Sans', sans-serif;color:#8a2a00;letter-spacing:0.95px;-webkit-text-stroke:0.25px currentColor;">WARNING!</div>
<div id="t24" style="position:absolute;left:885px;top:169.0px;white-space:nowrap;font:normal 17px/21px 'Liberation Sans', sans-serif;color:#7a4400;letter-spacing:-0.04px;">Do NOT change the sch yr on a class if there are grades for the year you are changing from.</div>
<div style="position:absolute;left:418px;top:196px;width:1186px;height:400px;box-sizing:border-box;background:#9ba4b4;border:1px solid #000;box-shadow:0 0 0 0.4px #000;"></div>
<div style="position:absolute;left:433px;top:204px;width:26px;height:23px;box-sizing:border-box;background:#fff;border:2.5px solid #bdbdbd;border-bottom-color:#8f8f8f;border-right-color:#a8a8a8;box-shadow:0 0 0 0.5px #999;"></div>
<div id="t25" style="position:absolute;left:468px;top:205.5px;white-space:nowrap;font:bold 16.5px/21px 'Liberation Sans', sans-serif;color:#000;letter-spacing:0.53px;-webkit-text-stroke:0.25px currentColor;text-decoration:underline;">Course:</div>
<div style="position:absolute;left:551px;top:203px;width:268px;height:26px;background:#d7dae0;border-radius:2px;"></div>
<div id="t26" style="position:absolute;left:555px;top:205.5px;white-space:nowrap;font:normal 16.5px/21px 'Liberation Sans', sans-serif;color:#6e7582;letter-spacing:0.45px;">1056 -&nbsp; P.E. Boys</div>
<div id="t27" style="position:absolute;left:434px;top:240.5px;white-space:nowrap;font:bold 16.5px/21px 'Liberation Sans', sans-serif;color:#000;letter-spacing:0.85px;-webkit-text-stroke:0.25px currentColor;">Teacher:</div>
<div style="position:absolute;left:551px;top:238px;width:268px;height:26px;background:#d7dae0;border-radius:2px;"></div>
<div id="t28" style="position:absolute;left:555px;top:240.9px;white-space:nowrap;font:normal 16.5px/21px 'Liberation Sans', sans-serif;color:#6e7582;letter-spacing:0.50px;">949 - Mr. McGaha</div>
<div id="t29" style="position:absolute;left:434px;top:276.5px;white-space:nowrap;font:bold 16.5px/21px 'Liberation Sans', sans-serif;color:#000;letter-spacing:0.81px;-webkit-text-stroke:0.25px currentColor;">Room:</div>
<div style="position:absolute;left:551px;top:274px;width:191px;height:22px;background:#c5cad4;border-radius:2px;"></div>
<div id="t30" style="position:absolute;left:557px;top:274.2px;white-space:nowrap;font:normal 16px/20px 'Liberation Sans', sans-serif;color:#7d8593;letter-spacing:0.49px;">Select Room</div>
<svg style="position:absolute;left:726px;top:280.25px" width="12" height="7.5"><path d="M1 1 L6.0 6.5 L11 1" fill="none" stroke="#7d8593" stroke-width="1.8"/></svg>
<div id="t31" style="position:absolute;left:434px;top:306.5px;white-space:nowrap;font:bold 16.5px/21px 'Liberation Sans', sans-serif;color:#000;letter-spacing:0.48px;-webkit-text-stroke:0.25px currentColor;">School Yr:</div>
<div style="position:absolute;left:551px;top:304px;width:168px;height:22px;background:#c5cad4;border-radius:2px;"></div>
<div id="t32" style="position:absolute;left:557px;top:305.0px;white-space:nowrap;font:normal 16px/20px 'Liberation Sans', sans-serif;color:#7d8593;letter-spacing:0.63px;">2025-26</div>
<svg style="position:absolute;left:703px;top:311.0px" width="12" height="7.5"><path d="M1 1 L6.0 6.5 L11 1" fill="none" stroke="#7d8593" stroke-width="1.8"/></svg>
<div id="t33" style="position:absolute;left:434px;top:337.5px;white-space:nowrap;font:bold 16.5px/21px 'Liberation Sans', sans-serif;color:#000;letter-spacing:0.83px;-webkit-text-stroke:0.25px currentColor;">Remarks:</div>
<div style="position:absolute;left:551px;top:336px;width:268px;height:25px;background:#d7dae0;border-radius:2px;"></div>
<div id="t34" style="position:absolute;left:555px;top:337.5px;white-space:nowrap;font:normal 16.5px/21px 'Liberation Sans', sans-serif;color:#6e7582;letter-spacing:0.78px;">9th</div>
<div id="t35" style="position:absolute;left:434px;top:373.5px;white-space:nowrap;font:bold 16.5px/21px 'Liberation Sans', sans-serif;color:#000;letter-spacing:0.78px;-webkit-text-stroke:0.25px currentColor;">Comments:</div>
<div style="position:absolute;left:551px;top:370px;width:268px;height:27px;background:#d7dae0;border-radius:2px;"></div>
<div id="t36" style="position:absolute;left:434px;top:408.8px;white-space:nowrap;font:bold 16.5px/21px 'Liberation Sans', sans-serif;color:#000;letter-spacing:0.41px;-webkit-text-stroke:0.25px currentColor;">Schoology:</div>
<div style="position:absolute;left:551px;top:406px;width:203px;height:26px;background:#d7dae0;border-radius:2px;"></div>
<div id="t37" style="position:absolute;left:434px;top:437.2px;white-space:nowrap;font:bold 16.5px/21px 'Liberation Sans', sans-serif;color:#000;letter-spacing:0.74px;-webkit-text-stroke:0.25px currentColor;">Grade:</div>
<div id="t38" style="position:absolute;left:551px;top:437.7px;white-space:nowrap;font:normal 16px/20px 'Liberation Sans', sans-serif;color:#111;letter-spacing:0.70px;">09</div>
<div id="t39" style="position:absolute;left:434px;top:460.1px;white-space:nowrap;font:bold 16.5px/21px 'Liberation Sans', sans-serif;color:#000;letter-spacing:0.85px;-webkit-text-stroke:0.25px currentColor;">Attendance</div>
<div style="position:absolute;left:556px;top:464px;width:15px;height:15px;background:#c9ccd2;border-radius:2px;"></div>
<svg style="position:absolute;left:556px;top:464px;" width="15" height="15" viewBox="0 0 15 15"><path d="M3.5 7.5 L6.3 10.5 L11.5 4" fill="none" stroke="#fff" stroke-width="1.7"/></svg>
<div id="t40" style="position:absolute;left:582px;top:463.5px;white-space:nowrap;font:bold 16.5px/21px 'Liberation Sans', sans-serif;color:#2a2e36;letter-spacing:0.59px;-webkit-text-stroke:0.25px currentColor;">On Report Card</div>
<div id="t41" style="position:absolute;left:434px;top:487.5px;white-space:nowrap;font:bold 16.5px/21px 'Liberation Sans', sans-serif;color:#000;letter-spacing:0.85px;-webkit-text-stroke:0.25px currentColor;">Attendance</div>
<div style="position:absolute;left:556px;top:492px;width:15px;height:15px;background:#dfe2e7;border-radius:2px;"></div>
<div id="t42" style="position:absolute;left:582px;top:490.5px;white-space:nowrap;font:normal 16.5px/21px 'Liberation Sans', sans-serif;color:#2a2e36;letter-spacing:-0.06px;">Exclude On Wizard</div>
<div id="t43" style="position:absolute;left:434px;top:514.9px;white-space:nowrap;font:bold 16.5px/21px 'Liberation Sans', sans-serif;color:#000;letter-spacing:1.26px;-webkit-text-stroke:0.25px currentColor;">Include</div>
<div style="position:absolute;left:556px;top:520px;width:15px;height:15px;background:#dfe2e7;border-radius:2px;"></div>
<div id="t44" style="position:absolute;left:582px;top:518.5px;white-space:nowrap;font:normal 16.5px/21px 'Liberation Sans', sans-serif;color:#2a2e36;letter-spacing:0.10px;">On Sign In Sheets</div>
<div id="t45" style="position:absolute;left:434px;top:541.8px;white-space:nowrap;font:bold 16.5px/21px 'Liberation Sans', sans-serif;color:#000;letter-spacing:0.20px;-webkit-text-stroke:0.25px currentColor;">Session</div>
<div style="position:absolute;left:551px;top:542px;width:99px;height:21px;background:#c5cad4;border-radius:2px;"></div>
<div id="t46" style="position:absolute;left:557px;top:542.5px;white-space:nowrap;font:normal 16px/20px 'Liberation Sans', sans-serif;color:#7d8593;letter-spacing:0.52px;">Current</div>
<svg style="position:absolute;left:634px;top:548.5px" width="12" height="7.5"><path d="M1 1 L6.0 6.5 L11 1" fill="none" stroke="#7d8593" stroke-width="1.8"/></svg>
<div id="t47" style="position:absolute;left:846px;top:205.2px;white-space:nowrap;font:bold 16.5px/21px 'Liberation Sans', sans-serif;color:#000;letter-spacing:1.02px;-webkit-text-stroke:0.25px currentColor;"># Enrolled:</div>
<div style="position:absolute;left:964px;top:206px;width:40px;height:25px;background:#d7dae0;border-radius:2px;"></div>
<div id="t48" style="position:absolute;left:978px;top:208.0px;white-space:nowrap;font:normal 16px/20px 'Liberation Sans', sans-serif;color:#6e7582;letter-spacing:0.00px;">7</div>
<div id="t49" style="position:absolute;left:1017px;top:205.2px;white-space:nowrap;font:bold 16.5px/21px 'Liberation Sans', sans-serif;color:#000;letter-spacing:0.81px;-webkit-text-stroke:0.25px currentColor;">Max Enroll:</div>
<div style="position:absolute;left:1134px;top:206px;width:41px;height:25px;background:#d7dae0;border-radius:2px;"></div>
<div style="position:absolute;left:1128px;top:235px;width:54px;height:1px;background:#333;"></div>
<div style="position:absolute;left:1128px;top:237px;width:54px;height:1px;background:#333;"></div>
<div id="t50" style="position:absolute;left:846px;top:236.2px;white-space:nowrap;font:bold 16.5px/21px 'Liberation Sans', sans-serif;color:#000;letter-spacing:1.00px;-webkit-text-stroke:0.25px currentColor;"># Requests:</div>
<div style="position:absolute;left:964px;top:235px;width:40px;height:26px;background:#d7dae0;border-radius:2px;"></div>
<div id="t51" style="position:absolute;left:1017px;top:236.2px;white-space:nowrap;font:bold 16.5px/21px 'Liberation Sans', sans-serif;color:#000;letter-spacing:0.74px;-webkit-text-stroke:0.25px currentColor;">Openings:</div>
<div style="position:absolute;left:1134px;top:238px;width:41px;height:26px;background:#d7dae0;border-radius:2px;"></div>
<div style="position:absolute;left:851px;top:273px;width:15px;height:15px;background:#c9ccd2;border-radius:2px;"></div>
<svg style="position:absolute;left:851px;top:273px;" width="15" height="15" viewBox="0 0 15 15"><path d="M3.5 7.5 L6.3 10.5 L11.5 4" fill="none" stroke="#fff" stroke-width="1.7"/></svg>
<div id="t52" style="position:absolute;left:872px;top:273.0px;white-space:nowrap;font:bold 16px/20px 'Liberation Sans', sans-serif;color:#2a2e36;letter-spacing:0.91px;-webkit-text-stroke:0.25px currentColor;">Print Lunch Receipt</div>
<div style="position:absolute;left:851px;top:300px;width:15px;height:15px;background:#dfe2e7;border-radius:2px;"></div>
<div id="t53" style="position:absolute;left:872px;top:300.0px;white-space:nowrap;font:normal 16px/20px 'Liberation Sans', sans-serif;color:#2a2e36;letter-spacing:0.23px;">Show Clock Status</div>
<div style="position:absolute;left:851px;top:328px;width:15px;height:15px;background:#dfe2e7;border-radius:2px;"></div>
<div id="t54" style="position:absolute;left:872px;top:328.0px;white-space:nowrap;font:normal 16px/20px 'Liberation Sans', sans-serif;color:#2a2e36;letter-spacing:0.36px;">Include Parent Square</div>
<div style="position:absolute;left:851px;top:360px;width:15px;height:15px;background:#dfe2e7;border-radius:2px;"></div>
<div id="t55" style="position:absolute;left:877px;top:359.0px;white-space:nowrap;font:normal 16px/20px 'Liberation Sans', sans-serif;color:#2a2e36;letter-spacing:0.35px;">Hide On Portal</div>
<div style="position:absolute;left:1028px;top:360px;width:15px;height:15px;background:#dfe2e7;border-radius:2px;"></div>
<div id="t56" style="position:absolute;left:1053px;top:359.0px;white-space:nowrap;font:normal 16px/20px 'Liberation Sans', sans-serif;color:#2a2e36;letter-spacing:0.80px;">Weight</div>
<div style="position:absolute;left:851px;top:384px;width:15px;height:15px;background:#dfe2e7;border-radius:2px;"></div>
<div id="t57" style="position:absolute;left:877px;top:383.0px;white-space:nowrap;font:normal 16px/20px 'Liberation Sans', sans-serif;color:#2a2e36;letter-spacing:0.18px;">Score</div>
<div style="position:absolute;left:1028px;top:384px;width:15px;height:15px;background:#c9ccd2;border-radius:2px;"></div>
<svg style="position:absolute;left:1028px;top:384px;" width="15" height="15" viewBox="0 0 15 15"><path d="M3.5 7.5 L6.3 10.5 L11.5 4" fill="none" stroke="#fff" stroke-width="1.7"/></svg>
<div id="t58" style="position:absolute;left:1053px;top:383.0px;white-space:nowrap;font:bold 16px/20px 'Liberation Sans', sans-serif;color:#2a2e36;letter-spacing:1.22px;-webkit-text-stroke:0.25px currentColor;">Nbr Grade</div>
<div style="position:absolute;left:851px;top:408px;width:15px;height:15px;background:#c9ccd2;border-radius:2px;"></div>
<svg style="position:absolute;left:851px;top:408px;" width="15" height="15" viewBox="0 0 15 15"><path d="M3.5 7.5 L6.3 10.5 L11.5 4" fill="none" stroke="#fff" stroke-width="1.7"/></svg>
<div id="t59" style="position:absolute;left:877px;top:408.0px;white-space:nowrap;font:bold 16px/20px 'Liberation Sans', sans-serif;color:#2a2e36;letter-spacing:1.15px;-webkit-text-stroke:0.25px currentColor;">Component</div>
<div style="position:absolute;left:1028px;top:408px;width:15px;height:15px;background:#c9ccd2;border-radius:2px;"></div>
<svg style="position:absolute;left:1028px;top:408px;" width="15" height="15" viewBox="0 0 15 15"><path d="M3.5 7.5 L6.3 10.5 L11.5 4" fill="none" stroke="#fff" stroke-width="1.7"/></svg>
<div id="t60" style="position:absolute;left:1053px;top:408.0px;white-space:nowrap;font:bold 16px/20px 'Liberation Sans', sans-serif;color:#2a2e36;letter-spacing:1.61px;-webkit-text-stroke:0.25px currentColor;">Letter</div>
<div style="position:absolute;left:851px;top:433px;width:15px;height:15px;background:#c9ccd2;border-radius:2px;"></div>
<svg style="position:absolute;left:851px;top:433px;" width="15" height="15" viewBox="0 0 15 15"><path d="M3.5 7.5 L6.3 10.5 L11.5 4" fill="none" stroke="#fff" stroke-width="1.7"/></svg>
<div id="t61" style="position:absolute;left:877px;top:433.0px;white-space:nowrap;font:bold 16px/20px 'Liberation Sans', sans-serif;color:#2a2e36;letter-spacing:1.26px;-webkit-text-stroke:0.25px currentColor;">Comments</div>
<div style="position:absolute;left:1028px;top:433px;width:15px;height:15px;background:#dfe2e7;border-radius:2px;"></div>
<div id="t62" style="position:absolute;left:1053px;top:433.0px;white-space:nowrap;font:normal 16px/20px 'Liberation Sans', sans-serif;color:#2a2e36;letter-spacing:-0.40px;">GPA</div>
<div style="position:absolute;left:851px;top:458px;width:15px;height:15px;background:#dfe2e7;border-radius:2px;"></div>
<div id="t63" style="position:absolute;left:877px;top:457.0px;white-space:nowrap;font:normal 16px/20px 'Liberation Sans', sans-serif;color:#2a2e36;letter-spacing:0.39px;">Assignment Avg</div>
<div style="position:absolute;left:1028px;top:458px;width:15px;height:15px;background:#c9ccd2;border-radius:2px;"></div>
<svg style="position:absolute;left:1028px;top:458px;" width="15" height="15" viewBox="0 0 15 15"><path d="M3.5 7.5 L6.3 10.5 L11.5 4" fill="none" stroke="#fff" stroke-width="1.7"/></svg>
<div id="t64" style="position:absolute;left:1053px;top:457.0px;white-space:nowrap;font:bold 16px/20px 'Liberation Sans', sans-serif;color:#2a2e36;letter-spacing:1.56px;-webkit-text-stroke:0.25px currentColor;">Incomplete</div>
<div id="t65" style="position:absolute;left:852px;top:477.0px;white-space:nowrap;font:bold 14px/18px 'Liberation Sans', sans-serif;color:#000;letter-spacing:0.61px;-webkit-text-stroke:0.25px currentColor;">Assignment Widget Title From:</div>
<svg style="position:absolute;left:865px;top:502px;" width="17" height="17" viewBox="0 0 17 17"><circle cx="8.5" cy="8.5" r="7.5" fill="#e3e5e9"/><circle cx="8.5" cy="8.5" r="5" fill="#b9bcc2"/></svg>
<div id="t66" style="position:absolute;left:890px;top:505.0px;white-space:nowrap;font:bold 14px/18px 'Liberation Sans', sans-serif;color:#2a2e36;letter-spacing:3.19px;-webkit-text-stroke:0.25px currentColor;">N/A</div>
<svg style="position:absolute;left:930px;top:502px;" width="17" height="17" viewBox="0 0 17 17"><circle cx="8.5" cy="8.5" r="7.5" fill="#dfe2e7"/></svg>
<div id="t67" style="position:absolute;left:955px;top:505.5px;white-space:nowrap;font:normal 13.5px/17px 'Liberation Sans', sans-serif;color:#2a2e36;letter-spacing:0.19px;">Lesson</div>
<svg style="position:absolute;left:1009px;top:502px;" width="17" height="17" viewBox="0 0 17 17"><circle cx="8.5" cy="8.5" r="7.5" fill="#dfe2e7"/></svg>
<div id="t68" style="position:absolute;left:1035px;top:505.5px;white-space:nowrap;font:normal 13.5px/17px 'Liberation Sans', sans-serif;color:#2a2e36;letter-spacing:0.33px;">Assignment</div>
<div style="position:absolute;left:1203px;top:205px;width:360px;height:32px;background:#414956;"></div>
<div id="t69" style="position:absolute;left:1209.5px;top:211.5px;white-space:nowrap;font:normal 16px/20px 'Liberation Sans', sans-serif;color:#fff;letter-spacing:-0.40px;">Classroom Settings</div>
<div id="t70" style="position:absolute;left:1210px;top:242.2px;white-space:nowrap;font:bold 16.5px/21px 'Liberation Sans', sans-serif;color:#000;letter-spacing:0.87px;-webkit-text-stroke:0.25px currentColor;">Settings Temp</div>
<div style="position:absolute;left:1354px;top:242px;width:176px;height:21px;background:#c5cad4;border-radius:2px;"></div>
<div id="t71" style="position:absolute;left:1360px;top:242.5px;white-space:nowrap;font:normal 16px/20px 'Liberation Sans', sans-serif;color:#7d8593;letter-spacing:0.38px;">Select Template</div>
<svg style="position:absolute;left:1514px;top:248.5px" width="12" height="7.5"><path d="M1 1 L6.0 6.5 L11 1" fill="none" stroke="#7d8593" stroke-width="1.8"/></svg>
<div id="t72" style="position:absolute;left:1210px;top:267.5px;white-space:nowrap;font:bold 16.5px/21px 'Liberation Sans', sans-serif;color:#000;letter-spacing:0.90px;-webkit-text-stroke:0.25px currentColor;">Comp Temp</div>
<div style="position:absolute;left:1354px;top:267px;width:176px;height:21px;background:#c5cad4;border-radius:2px;"></div>
<div id="t73" style="position:absolute;left:1360px;top:267.5px;white-space:nowrap;font:normal 16px/20px 'Liberation Sans', sans-serif;color:#7d8593;letter-spacing:0.38px;">Select Template</div>
<svg style="position:absolute;left:1514px;top:273.5px" width="12" height="7.5"><path d="M1 1 L6.0 6.5 L11 1" fill="none" stroke="#7d8593" stroke-width="1.8"/></svg>
<div id="t74" style="position:absolute;left:1210px;top:292.7px;white-space:nowrap;font:bold 16.5px/21px 'Liberation Sans', sans-serif;color:#000;letter-spacing:0.83px;-webkit-text-stroke:0.25px currentColor;">Round to</div>
<div style="position:absolute;left:1354px;top:293px;width:36px;height:21px;background:#c5cad4;border-radius:2px;"></div>
<div id="t75" style="position:absolute;left:1360px;top:293.5px;white-space:nowrap;font:normal 16px/20px 'Liberation Sans', sans-serif;color:#7d8593;letter-spacing:0.00px;">0</div>
<svg style="position:absolute;left:1373px;top:299.5px" width="12" height="7.5"><path d="M1 1 L6.0 6.5 L11 1" fill="none" stroke="#7d8593" stroke-width="1.8"/></svg>
<div id="t76" style="position:absolute;left:1400.4px;top:293.0px;white-space:nowrap;font:normal 16.5px/21px 'Liberation Sans', sans-serif;color:#111;letter-spacing:-0.00px;">places</div>
<div id="t77" style="position:absolute;left:1210px;top:318.5px;white-space:nowrap;font:bold 16.5px/21px 'Liberation Sans', sans-serif;color:#000;letter-spacing:0.81px;-webkit-text-stroke:0.25px currentColor;">Pct or Wt'd</div>
<div style="position:absolute;left:1354px;top:319px;width:106px;height:21px;background:#c5cad4;border-radius:2px;"></div>
<div id="t78" style="position:absolute;left:1360px;top:319.5px;white-space:nowrap;font:normal 16px/20px 'Liberation Sans', sans-serif;color:#7d8593;letter-spacing:0.39px;">Percent</div>
<svg style="position:absolute;left:1443px;top:325.5px" width="12" height="7.5"><path d="M1 1 L6.0 6.5 L11 1" fill="none" stroke="#7d8593" stroke-width="1.8"/></svg>
<div id="t79" style="position:absolute;left:1210px;top:343.7px;white-space:nowrap;font:bold 16.5px/21px 'Liberation Sans', sans-serif;color:#000;letter-spacing:0.33px;-webkit-text-stroke:0.25px currentColor;">Calc By</div>
<div style="position:absolute;left:1354px;top:344px;width:166px;height:20px;background:#c5cad4;border-radius:2px;"></div>
<div id="t80" style="position:absolute;left:1360px;top:344.2px;white-space:nowrap;font:normal 16px/20px 'Liberation Sans', sans-serif;color:#7d8593;letter-spacing:0.56px;">Grade</div>
<svg style="position:absolute;left:1502px;top:350.25px" width="12" height="7.5"><path d="M1 1 L6.0 6.5 L11 1" fill="none" stroke="#7d8593" stroke-width="1.8"/></svg>
<div id="t81" style="position:absolute;left:1210px;top:369.5px;white-space:nowrap;font:bold 16.5px/21px 'Liberation Sans', sans-serif;color:#000;letter-spacing:2.33px;-webkit-text-stroke:0.25px currentColor;">I/C's</div>
<div style="position:absolute;left:1354px;top:370px;width:77px;height:20px;background:#c5cad4;border-radius:2px;"></div>
<div id="t82" style="position:absolute;left:1360px;top:370.2px;white-space:nowrap;font:normal 16px/20px 'Liberation Sans', sans-serif;color:#7d8593;letter-spacing:1.05px;">No</div>
<svg style="position:absolute;left:1414.3px;top:376.25px" width="12" height="7.5"><path d="M1 1 L6.0 6.5 L11 1" fill="none" stroke="#7d8593" stroke-width="1.8"/></svg>
<div id="t83" style="position:absolute;left:1437.2px;top:370.0px;white-space:nowrap;font:normal 16.5px/21px 'Liberation Sans', sans-serif;color:#111;letter-spacing:-0.01px;">Avg as Zero</div>
<div id="t84" style="position:absolute;left:1210px;top:394.5px;white-space:nowrap;font:bold 16.5px/21px 'Liberation Sans', sans-serif;color:#000;letter-spacing:1.00px;-webkit-text-stroke:0.25px currentColor;">Grade</div>
<div style="position:absolute;left:1354px;top:394px;width:96px;height:22px;background:#c5cad4;border-radius:2px;"></div>
<div id="t85" style="position:absolute;left:1360px;top:395.0px;white-space:nowrap;font:normal 16px/20px 'Liberation Sans', sans-serif;color:#7d8593;letter-spacing:0.43px;">Both</div>
<svg style="position:absolute;left:1432.4px;top:401.0px" width="12" height="7.5"><path d="M1 1 L6.0 6.5 L11 1" fill="none" stroke="#7d8593" stroke-width="1.8"/></svg>
<div id="t86" style="position:absolute;left:1454.5px;top:395.0px;white-space:nowrap;font:normal 16.5px/21px 'Liberation Sans', sans-serif;color:#111;letter-spacing:-0.02px;">on Rep Card</div>
<div id="t87" style="position:absolute;left:1210px;top:420.9px;white-space:nowrap;font:bold 16.5px/21px 'Liberation Sans', sans-serif;color:#000;letter-spacing:1.06px;-webkit-text-stroke:0.25px currentColor;">Rows</div>
<div style="position:absolute;left:1354px;top:420px;width:56px;height:26px;background:#d7dae0;border-radius:2px;"></div>
<div id="t88" style="position:absolute;left:1392px;top:423.5px;white-space:nowrap;font:normal 16px/20px 'Liberation Sans', sans-serif;color:#6e7582;letter-spacing:0.00px;">0</div>
<div id="t89" style="position:absolute;left:1423px;top:420.9px;white-space:nowrap;font:bold 16.5px/21px 'Liberation Sans', sans-serif;color:#000;letter-spacing:0.31px;-webkit-text-stroke:0.25px currentColor;">Cols</div>
<div style="position:absolute;left:1471px;top:420px;width:57px;height:26px;background:#d7dae0;border-radius:2px;"></div>
<div id="t90" style="position:absolute;left:1511px;top:423.5px;white-space:nowrap;font:normal 16px/20px 'Liberation Sans', sans-serif;color:#6e7582;letter-spacing:0.00px;">0</div>
<div id="t91" style="position:absolute;left:1210px;top:450.9px;white-space:nowrap;font:bold 16.5px/21px 'Liberation Sans', sans-serif;color:#000;letter-spacing:0.47px;-webkit-text-stroke:0.25px currentColor;">Rep Card Col</div>
<div style="position:absolute;left:1354px;top:451px;width:56px;height:26px;background:#d7dae0;border-radius:2px;"></div>
<div id="t92" style="position:absolute;left:1392px;top:453.5px;white-space:nowrap;font:normal 16px/20px 'Liberation Sans', sans-serif;color:#6e7582;letter-spacing:0.00px;">0</div>
<div style="position:absolute;left:1216px;top:485px;width:15px;height:15px;background:#dfe2e7;border-radius:2px;"></div>
<div id="t93" style="position:absolute;left:1236px;top:485.0px;white-space:nowrap;font:normal 16px/20px 'Liberation Sans', sans-serif;color:#2a2e36;letter-spacing:0.25px;">Marked Components On Card</div>
<div style="position:absolute;left:1216px;top:512px;width:15px;height:15px;background:#dfe2e7;border-radius:2px;"></div>
<div id="t94" style="position:absolute;left:1236px;top:512.0px;white-space:nowrap;font:normal 16px/20px 'Liberation Sans', sans-serif;color:#2a2e36;letter-spacing:0.27px;">Show Only Components On Card</div>
<div id="t95" style="position:absolute;left:1210px;top:535.8px;white-space:nowrap;font:bold 16.5px/21px 'Liberation Sans', sans-serif;color:#000;letter-spacing:0.60px;-webkit-text-stroke:0.25px currentColor;">G Class Id</div>
<div style="position:absolute;left:1354px;top:536px;width:137px;height:26px;background:#d7dae0;border-radius:2px;"></div>
<div id="t96" style="position:absolute;left:1210px;top:565.9px;white-space:nowrap;font:bold 16.5px/21px 'Liberation Sans', sans-serif;color:#000;letter-spacing:0.54px;-webkit-text-stroke:0.25px currentColor;">Master Class</div>
<div style="position:absolute;left:1354px;top:566px;width:202px;height:26px;background:#d7dae0;border-radius:2px;"></div>
<div style="position:absolute;left:425px;top:617px;width:195px;height:23px;box-sizing:border-box;background:#fff;border:1px solid #555;border-radius:2px;"></div>
<div id="t97" style="position:absolute;left:431px;top:618.0px;white-space:nowrap;font:normal 16.5px/21px 'Liberation Sans', sans-serif;color:#111;letter-spacing:0.25px;">Default Columns</div>
<svg style="position:absolute;left:602px;top:624px" width="13" height="8.5"><path d="M1 1 L6.5 7.5 L12 1" fill="none" stroke="#000" stroke-width="2"/></svg>
<div style="position:absolute;left:635px;top:614px;width:105px;height:39px;box-sizing:border-box;background:linear-gradient(#efefef,#e2e2e2);border:1px solid #8c8c8c;border-radius:3px;"></div>
<div id="t98" style="position:absolute;left:667px;top:623.0px;white-space:nowrap;font:normal 14.5px/18px 'Liberation Sans', sans-serif;color:#222;letter-spacing:-0.10px;">Basic Grid</div>
<svg style="position:absolute;left:641px;top:622px;" width="22" height="22" viewBox="0 0 22 22"><rect x="1.5" y="2.5" width="17" height="17" fill="#f3f6fb" stroke="#8ea0c4"/><rect x="2" y="3" width="16" height="3.5" fill="#a9c2e0"/><path d="M2 10h16M2 14h16M7 6.5v13M12.5 6.5v13" stroke="#9db1d4" stroke-width="0.9"/><circle cx="16" cy="17" r="4.5" fill="#5cb040"/><path d="M16 14.5v5M13.5 17h5" stroke="#fff" stroke-width="1.5"/></svg>
<div style="position:absolute;left:743px;top:614px;width:134px;height:39px;box-sizing:border-box;background:linear-gradient(#efefef,#e2e2e2);border:1px solid #8c8c8c;border-radius:3px;"></div>
<div id="t99" style="position:absolute;left:774px;top:623.0px;white-space:nowrap;font:normal 14.5px/18px 'Liberation Sans', sans-serif;color:#222;letter-spacing:-0.04px;">Advanced Grid</div>
<svg style="position:absolute;left:749px;top:622px;" width="22" height="22" viewBox="0 0 22 22"><rect x="1.5" y="2.5" width="17" height="17" fill="#f3f6fb" stroke="#8ea0c4"/><rect x="2" y="3" width="16" height="3.5" fill="#a9c2e0"/><path d="M2 10h16M2 14h16M7 6.5v13M12.5 6.5v13" stroke="#9db1d4" stroke-width="0.9"/><path d="M5 20 L7 15 L16 6 L19 9 L10 18z" fill="#e8c060" stroke="#b08838" stroke-width="0.8"/></svg>
<svg style="position:absolute;left:882px;top:616px;" width="20" height="18" viewBox="0 0 20 18"><rect x="1" y="5" width="7" height="11" rx="1" fill="#555"/><rect x="10" y="5" width="7" height="11" rx="1" fill="#555"/><rect x="2" y="2" width="5" height="4" fill="#777"/><rect x="11" y="2" width="5" height="4" fill="#777"/><rect x="7" y="7" width="4" height="4" fill="#666"/><rect x="2" y="9" width="2" height="4" fill="#999"/><rect x="11" y="9" width="2" height="4" fill="#999"/></svg>
<div id="t100" style="position:absolute;left:905px;top:614.5px;white-space:nowrap;font:normal 16.5px/21px 'Liberation Sans', sans-serif;color:#111;letter-spacing:-0.17px;">Course Code</div>
<div id="t101" style="position:absolute;left:1013px;top:605.0px;white-space:nowrap;font:normal 14px/18px 'Liberation Sans', sans-serif;color:#111;letter-spacing:0.03px;font-style:italic;">After Searching Press Enter, Tab or Click Out of Box</div>
<div style="position:absolute;left:1012px;top:622px;width:333px;height:26px;box-sizing:border-box;background:#fcf8c6;border:1px solid #222;"></div>
<div id="t102" style="position:absolute;left:1016px;top:624.5px;white-space:nowrap;font:normal 16.5px/21px 'Liberation Sans', sans-serif;color:#a8a89c;letter-spacing:0.45px;">Enter: Course Code</div>
<div style="position:absolute;left:418px;top:663px;width:1183px;height:336px;background:#fff;border-left:1px solid #8a8a8a;border-top:1px solid #8a8a8a;box-sizing:border-box;"></div>
<div style="position:absolute;left:419px;top:664px;width:1157px;height:26px;background:linear-gradient(to bottom,#ffffff 0%,#f7f7f7 50%,#ebebeb 100%);"></div>
<div style="position:absolute;left:468px;top:664px;width:1px;height:26px;background:#dcdcdc;"></div>
<div style="position:absolute;left:531px;top:664px;width:1px;height:26px;background:#dcdcdc;"></div>
<div style="position:absolute;left:671px;top:664px;width:1px;height:26px;background:#dcdcdc;"></div>
<div style="position:absolute;left:811px;top:664px;width:1px;height:26px;background:#dcdcdc;"></div>
<div style="position:absolute;left:867px;top:664px;width:1px;height:26px;background:#dcdcdc;"></div>
<div style="position:absolute;left:1007px;top:664px;width:1px;height:26px;background:#dcdcdc;"></div>
<div style="position:absolute;left:1108px;top:664px;width:1px;height:26px;background:#dcdcdc;"></div>
<div style="position:absolute;left:1184px;top:664px;width:1px;height:26px;background:#dcdcdc;"></div>
<div style="position:absolute;left:1240px;top:664px;width:1px;height:26px;background:#dcdcdc;"></div>
<div style="position:absolute;left:1296px;top:664px;width:1px;height:26px;background:#dcdcdc;"></div>
<div style="position:absolute;left:1352px;top:664px;width:1px;height:26px;background:#dcdcdc;"></div>
<div style="position:absolute;left:1408px;top:664px;width:1px;height:26px;background:#dcdcdc;"></div>
<div style="position:absolute;left:1464px;top:664px;width:1px;height:26px;background:#dcdcdc;"></div>
<div style="position:absolute;left:1520px;top:664px;width:1px;height:26px;background:#dcdcdc;"></div>
<div style="position:absolute;left:1575px;top:664px;width:1px;height:26px;background:#dcdcdc;"></div>
<div style="position:absolute;left:404.5px;top:668px;width:80px;text-align:center;font:14px/18px 'Liberation Sans', sans-serif;color:#111;">Tag</div>
<div style="position:absolute;left:475px;top:668px;white-space:nowrap;font:14px/18px 'Liberation Sans', sans-serif;color:#111;">Id #</div>
<div style="position:absolute;left:537px;top:668px;white-space:nowrap;font:14px/18px 'Liberation Sans', sans-serif;color:#111;">Course Code</div>
<div style="position:absolute;left:678px;top:668px;white-space:nowrap;font:14px/18px 'Liberation Sans', sans-serif;color:#111;">Teacher w Id</div>
<div style="position:absolute;left:782.5px;top:668px;width:80px;text-align:right;font:14px/18px 'Liberation Sans', sans-serif;color:#111;">Nbr</div>
<div style="position:absolute;left:873px;top:668px;white-space:nowrap;font:14px/18px 'Liberation Sans', sans-serif;color:#111;">Grade Scale</div>
<div style="position:absolute;left:1014px;top:668px;white-space:nowrap;font:14px/18px 'Liberation Sans', sans-serif;color:#111;">Room</div>
<div style="position:absolute;left:1115px;top:668px;white-space:nowrap;font:14px/18px 'Liberation Sans', sans-serif;color:#111;">Sch Yr</div>
<div style="position:absolute;left:1173px;top:668px;width:80px;text-align:center;font:14px/18px 'Liberation Sans', sans-serif;color:#111;">Gp 1</div>
<div style="position:absolute;left:1229px;top:668px;width:80px;text-align:center;font:14px/18px 'Liberation Sans', sans-serif;color:#111;">Gp 2</div>
<div style="position:absolute;left:1303px;top:668px;white-space:nowrap;font:14px/18px 'Liberation Sans', sans-serif;color:#111;">Midt...</div>
<div style="position:absolute;left:1341px;top:668px;width:80px;text-align:center;font:14px/18px 'Liberation Sans', sans-serif;color:#111;">Gp 3</div>
<div style="position:absolute;left:1397px;top:668px;width:80px;text-align:center;font:14px/18px 'Liberation Sans', sans-serif;color:#111;">Gp4</div>
<div style="position:absolute;left:1471px;top:668px;white-space:nowrap;font:14px/18px 'Liberation Sans', sans-serif;color:#111;">Exam2</div>
<div style="position:absolute;left:1525px;top:668px;white-space:nowrap;font:14px/18px 'Liberation Sans', sans-serif;color:#111;">Sum...</div>
<div style="position:absolute;left:1576px;top:664px;width:24px;height:335px;background:#fff;"></div>
<div style="position:absolute;left:1600px;top:663px;width:1px;height:336px;background:#8a8a8a;"></div>
<svg style="position:absolute;left:1581px;top:670px;" width="14" height="11" viewBox="0 0 14 11"><path d="M1 10 L7 2 L13 10z" fill="#606060"/></svg>
<div style="position:absolute;left:1582px;top:690px;width:12px;height:60px;background:#7a7a7a;border-radius:6px;"></div>
<div style="position:absolute;left:419px;top:691px;width:1160px;height:26px;background:#8a8a8a;"></div>
<div style="position:absolute;left:468px;top:691px;width:1px;height:26px;background:#d0d0d0;"></div>
<div style="position:absolute;left:530px;top:691px;width:1px;height:26px;background:#d0d0d0;"></div>
<div style="position:absolute;left:671px;top:691px;width:1px;height:26px;background:#d0d0d0;"></div>
<div style="position:absolute;left:811px;top:691px;width:1px;height:26px;background:#d0d0d0;"></div>
<div style="position:absolute;left:866px;top:691px;width:1px;height:26px;background:#d0d0d0;"></div>
<div style="position:absolute;left:1006px;top:691px;width:1px;height:26px;background:#d0d0d0;"></div>
<div style="position:absolute;left:1107px;top:691px;width:1px;height:26px;background:#d0d0d0;"></div>
<div style="position:absolute;left:1183px;top:691px;width:1px;height:26px;background:#d0d0d0;"></div>
<div style="position:absolute;left:1238px;top:691px;width:1px;height:26px;background:#d0d0d0;"></div>
<div style="position:absolute;left:1294px;top:691px;width:1px;height:26px;background:#d0d0d0;"></div>
<div style="position:absolute;left:1349px;top:691px;width:1px;height:26px;background:#d0d0d0;"></div>
<div style="position:absolute;left:1405px;top:691px;width:1px;height:26px;background:#d0d0d0;"></div>
<div style="position:absolute;left:1460px;top:691px;width:1px;height:26px;background:#d0d0d0;"></div>
<div style="position:absolute;left:1516px;top:691px;width:1px;height:26px;background:#d0d0d0;"></div>
<div style="position:absolute;left:1572px;top:691px;width:1px;height:26px;background:#d0d0d0;"></div>
<div style="position:absolute;left:432px;top:692px;width:26px;height:25px;box-sizing:border-box;background:#fff;border:1px solid #8c8c8c;border-bottom-color:#6e6e6e;box-shadow:inset 0 0 0 1px #a8a8a8, inset 0 0 0 2px #c4c4c4, inset 0 0 0 3px #e4e4e4;"></div>
<div style="position:absolute;left:474px;top:695px;white-space:nowrap;font:14px/18px 'Liberation Sans', sans-serif;color:#fff;letter-spacing:0px;">4694</div>
<div style="position:absolute;left:536px;top:695px;white-space:nowrap;font:14px/18px 'Liberation Sans', sans-serif;color:#fff;letter-spacing:0px;">P.E. Boys</div>
<div style="position:absolute;left:676px;top:695px;white-space:nowrap;font:14px/18px 'Liberation Sans', sans-serif;color:#fff;letter-spacing:0px;">949 - Mr. McGaha</div>
<div style="position:absolute;left:802.5px;top:695px;width:60px;text-align:right;font:14px/18px 'Liberation Sans', sans-serif;color:#fff;">7</div>
<div style="position:absolute;left:872.5px;top:695px;white-space:nowrap;font:14px/18px 'Liberation Sans', sans-serif;color:#fff;letter-spacing:0.5px;">10 pt +/- (High)</div>
<div style="position:absolute;left:1012px;top:695px;white-space:nowrap;font:14px/18px 'Liberation Sans', sans-serif;color:#fff;letter-spacing:0px;"></div>
<div style="position:absolute;left:1113.5px;top:695px;white-space:nowrap;font:14px/18px 'Liberation Sans', sans-serif;color:#fff;letter-spacing:0px;">2025-26</div>
<svg style="position:absolute;left:1200px;top:691.5px;" width="22" height="21" viewBox="0 0 22 21"><defs><linearGradient id="gck" x1="0" y1="0" x2="0" y2="1"><stop offset="0" stop-color="#8ed04e"/><stop offset="1" stop-color="#3f9a1e"/></linearGradient></defs><path d="M1 8.5 L4.5 7 L8.5 13 L19.5 1 L21 2.5 L9 20 L7.5 20z" fill="url(#gck)" stroke="#4a9a28" stroke-width="0.6"/></svg>
<svg style="position:absolute;left:1256px;top:691.5px;" width="22" height="21" viewBox="0 0 22 21"><defs><linearGradient id="gck" x1="0" y1="0" x2="0" y2="1"><stop offset="0" stop-color="#8ed04e"/><stop offset="1" stop-color="#3f9a1e"/></linearGradient></defs><path d="M1 8.5 L4.5 7 L8.5 13 L19.5 1 L21 2.5 L9 20 L7.5 20z" fill="url(#gck)" stroke="#4a9a28" stroke-width="0.6"/></svg>
<svg style="position:absolute;left:1311px;top:691.5px;" width="22" height="21" viewBox="0 0 22 21"><defs><linearGradient id="gck" x1="0" y1="0" x2="0" y2="1"><stop offset="0" stop-color="#8ed04e"/><stop offset="1" stop-color="#3f9a1e"/></linearGradient></defs><path d="M1 8.5 L4.5 7 L8.5 13 L19.5 1 L21 2.5 L9 20 L7.5 20z" fill="url(#gck)" stroke="#4a9a28" stroke-width="0.6"/></svg>
<svg style="position:absolute;left:1370px;top:693px;" width="17" height="17" viewBox="0 0 17 17"><path d="M3 3 L14 14 M14 3 L3 14" stroke="#c9574f" stroke-width="4.4" stroke-linecap="round"/><path d="M3 3 L14 14 M14 3 L3 14" stroke="#e87470" stroke-width="2.8" stroke-linecap="round"/></svg>
<svg style="position:absolute;left:1425px;top:693px;" width="17" height="17" viewBox="0 0 17 17"><path d="M3 3 L14 14 M14 3 L3 14" stroke="#c9574f" stroke-width="4.4" stroke-linecap="round"/><path d="M3 3 L14 14 M14 3 L3 14" stroke="#e87470" stroke-width="2.8" stroke-linecap="round"/></svg>
<svg style="position:absolute;left:1481px;top:693px;" width="17" height="17" viewBox="0 0 17 17"><path d="M3 3 L14 14 M14 3 L3 14" stroke="#c9574f" stroke-width="4.4" stroke-linecap="round"/><path d="M3 3 L14 14 M14 3 L3 14" stroke="#e87470" stroke-width="2.8" stroke-linecap="round"/></svg>
<svg style="position:absolute;left:1537px;top:693px;" width="17" height="17" viewBox="0 0 17 17"><path d="M3 3 L14 14 M14 3 L3 14" stroke="#c9574f" stroke-width="4.4" stroke-linecap="round"/><path d="M3 3 L14 14 M14 3 L3 14" stroke="#e87470" stroke-width="2.8" stroke-linecap="round"/></svg>
<div style="position:absolute;left:419px;top:717px;width:1160px;height:26px;background:#e3e3e3;"></div>
<div style="position:absolute;left:468px;top:717px;width:1px;height:26px;background:#d6d6d6;"></div>
<div style="position:absolute;left:530px;top:717px;width:1px;height:26px;background:#d6d6d6;"></div>
<div style="position:absolute;left:671px;top:717px;width:1px;height:26px;background:#d6d6d6;"></div>
<div style="position:absolute;left:811px;top:717px;width:1px;height:26px;background:#d6d6d6;"></div>
<div style="position:absolute;left:866px;top:717px;width:1px;height:26px;background:#d6d6d6;"></div>
<div style="position:absolute;left:1006px;top:717px;width:1px;height:26px;background:#d6d6d6;"></div>
<div style="position:absolute;left:1107px;top:717px;width:1px;height:26px;background:#d6d6d6;"></div>
<div style="position:absolute;left:1183px;top:717px;width:1px;height:26px;background:#d6d6d6;"></div>
<div style="position:absolute;left:1238px;top:717px;width:1px;height:26px;background:#d6d6d6;"></div>
<div style="position:absolute;left:1294px;top:717px;width:1px;height:26px;background:#d6d6d6;"></div>
<div style="position:absolute;left:1349px;top:717px;width:1px;height:26px;background:#d6d6d6;"></div>
<div style="position:absolute;left:1405px;top:717px;width:1px;height:26px;background:#d6d6d6;"></div>
<div style="position:absolute;left:1460px;top:717px;width:1px;height:26px;background:#d6d6d6;"></div>
<div style="position:absolute;left:1516px;top:717px;width:1px;height:26px;background:#d6d6d6;"></div>
<div style="position:absolute;left:1572px;top:717px;width:1px;height:26px;background:#d6d6d6;"></div>
<div style="position:absolute;left:432px;top:718px;width:26px;height:25px;box-sizing:border-box;background:#fff;border:1px solid #8c8c8c;border-bottom-color:#6e6e6e;box-shadow:inset 0 0 0 1px #a8a8a8, inset 0 0 0 2px #c4c4c4, inset 0 0 0 3px #e4e4e4;"></div>
<div style="position:absolute;left:474px;top:721px;white-space:nowrap;font:14px/18px 'Liberation Sans', sans-serif;color:#111;letter-spacing:0px;">4800</div>
<div style="position:absolute;left:536px;top:721px;white-space:nowrap;font:14px/18px 'Liberation Sans', sans-serif;color:#111;letter-spacing:0px;">P.E. Boys</div>
<div style="position:absolute;left:676px;top:721px;white-space:nowrap;font:14px/18px 'Liberation Sans', sans-serif;color:#111;letter-spacing:0px;">949 - Mr. McGaha</div>
<div style="position:absolute;left:802.5px;top:721px;width:60px;text-align:right;font:14px/18px 'Liberation Sans', sans-serif;color:#111;">0</div>
<div style="position:absolute;left:872.5px;top:721px;white-space:nowrap;font:14px/18px 'Liberation Sans', sans-serif;color:#111;letter-spacing:0.5px;">10 pt +/- (High)</div>
<div style="position:absolute;left:1012px;top:721px;white-space:nowrap;font:14px/18px 'Liberation Sans', sans-serif;color:#111;letter-spacing:0px;"></div>
<div style="position:absolute;left:1113.5px;top:721px;white-space:nowrap;font:14px/18px 'Liberation Sans', sans-serif;color:#111;letter-spacing:0px;">2026-27</div>
<svg style="position:absolute;left:1200px;top:717.5px;" width="22" height="21" viewBox="0 0 22 21"><defs><linearGradient id="gck" x1="0" y1="0" x2="0" y2="1"><stop offset="0" stop-color="#8ed04e"/><stop offset="1" stop-color="#3f9a1e"/></linearGradient></defs><path d="M1 8.5 L4.5 7 L8.5 13 L19.5 1 L21 2.5 L9 20 L7.5 20z" fill="url(#gck)" stroke="#4a9a28" stroke-width="0.6"/></svg>
<svg style="position:absolute;left:1256px;top:717.5px;" width="22" height="21" viewBox="0 0 22 21"><defs><linearGradient id="gck" x1="0" y1="0" x2="0" y2="1"><stop offset="0" stop-color="#8ed04e"/><stop offset="1" stop-color="#3f9a1e"/></linearGradient></defs><path d="M1 8.5 L4.5 7 L8.5 13 L19.5 1 L21 2.5 L9 20 L7.5 20z" fill="url(#gck)" stroke="#4a9a28" stroke-width="0.6"/></svg>
<svg style="position:absolute;left:1311px;top:717.5px;" width="22" height="21" viewBox="0 0 22 21"><defs><linearGradient id="gck" x1="0" y1="0" x2="0" y2="1"><stop offset="0" stop-color="#8ed04e"/><stop offset="1" stop-color="#3f9a1e"/></linearGradient></defs><path d="M1 8.5 L4.5 7 L8.5 13 L19.5 1 L21 2.5 L9 20 L7.5 20z" fill="url(#gck)" stroke="#4a9a28" stroke-width="0.6"/></svg>
<svg style="position:absolute;left:1370px;top:719px;" width="17" height="17" viewBox="0 0 17 17"><path d="M3 3 L14 14 M14 3 L3 14" stroke="#c9574f" stroke-width="4.4" stroke-linecap="round"/><path d="M3 3 L14 14 M14 3 L3 14" stroke="#e87470" stroke-width="2.8" stroke-linecap="round"/></svg>
<svg style="position:absolute;left:1425px;top:719px;" width="17" height="17" viewBox="0 0 17 17"><path d="M3 3 L14 14 M14 3 L3 14" stroke="#c9574f" stroke-width="4.4" stroke-linecap="round"/><path d="M3 3 L14 14 M14 3 L3 14" stroke="#e87470" stroke-width="2.8" stroke-linecap="round"/></svg>
<svg style="position:absolute;left:1481px;top:719px;" width="17" height="17" viewBox="0 0 17 17"><path d="M3 3 L14 14 M14 3 L3 14" stroke="#c9574f" stroke-width="4.4" stroke-linecap="round"/><path d="M3 3 L14 14 M14 3 L3 14" stroke="#e87470" stroke-width="2.8" stroke-linecap="round"/></svg>
<svg style="position:absolute;left:1537px;top:719px;" width="17" height="17" viewBox="0 0 17 17"><path d="M3 3 L14 14 M14 3 L3 14" stroke="#c9574f" stroke-width="4.4" stroke-linecap="round"/><path d="M3 3 L14 14 M14 3 L3 14" stroke="#e87470" stroke-width="2.8" stroke-linecap="round"/></svg>
<div style="position:absolute;left:419px;top:743px;width:1160px;height:26px;background:#ffffff;"></div>
<div style="position:absolute;left:468px;top:743px;width:1px;height:26px;background:#d6d6d6;"></div>
<div style="position:absolute;left:530px;top:743px;width:1px;height:26px;background:#d6d6d6;"></div>
<div style="position:absolute;left:671px;top:743px;width:1px;height:26px;background:#d6d6d6;"></div>
<div style="position:absolute;left:811px;top:743px;width:1px;height:26px;background:#d6d6d6;"></div>
<div style="position:absolute;left:866px;top:743px;width:1px;height:26px;background:#d6d6d6;"></div>
<div style="position:absolute;left:1006px;top:743px;width:1px;height:26px;background:#d6d6d6;"></div>
<div style="position:absolute;left:1107px;top:743px;width:1px;height:26px;background:#d6d6d6;"></div>
<div style="position:absolute;left:1183px;top:743px;width:1px;height:26px;background:#d6d6d6;"></div>
<div style="position:absolute;left:1238px;top:743px;width:1px;height:26px;background:#d6d6d6;"></div>
<div style="position:absolute;left:1294px;top:743px;width:1px;height:26px;background:#d6d6d6;"></div>
<div style="position:absolute;left:1349px;top:743px;width:1px;height:26px;background:#d6d6d6;"></div>
<div style="position:absolute;left:1405px;top:743px;width:1px;height:26px;background:#d6d6d6;"></div>
<div style="position:absolute;left:1460px;top:743px;width:1px;height:26px;background:#d6d6d6;"></div>
<div style="position:absolute;left:1516px;top:743px;width:1px;height:26px;background:#d6d6d6;"></div>
<div style="position:absolute;left:1572px;top:743px;width:1px;height:26px;background:#d6d6d6;"></div>
<div style="position:absolute;left:432px;top:744px;width:26px;height:25px;box-sizing:border-box;background:#fff;border:1px solid #8c8c8c;border-bottom-color:#6e6e6e;box-shadow:inset 0 0 0 1px #a8a8a8, inset 0 0 0 2px #c4c4c4, inset 0 0 0 3px #e4e4e4;"></div>
<div style="position:absolute;left:474px;top:747px;white-space:nowrap;font:14px/18px 'Liberation Sans', sans-serif;color:#111;letter-spacing:0px;">4695</div>
<div style="position:absolute;left:536px;top:747px;white-space:nowrap;font:14px/18px 'Liberation Sans', sans-serif;color:#111;letter-spacing:0px;">P.E. Girls</div>
<div style="position:absolute;left:676px;top:747px;white-space:nowrap;font:14px/18px 'Liberation Sans', sans-serif;color:#111;letter-spacing:0px;">1188 - Mr. Camp</div>
<div style="position:absolute;left:802.5px;top:747px;width:60px;text-align:right;font:14px/18px 'Liberation Sans', sans-serif;color:#111;">10</div>
<div style="position:absolute;left:872.5px;top:747px;white-space:nowrap;font:14px/18px 'Liberation Sans', sans-serif;color:#111;letter-spacing:0.5px;">10 pt +/- (High)</div>
<div style="position:absolute;left:1012px;top:747px;white-space:nowrap;font:14px/18px 'Liberation Sans', sans-serif;color:#111;letter-spacing:0px;">Gymnasium</div>
<div style="position:absolute;left:1113.5px;top:747px;white-space:nowrap;font:14px/18px 'Liberation Sans', sans-serif;color:#111;letter-spacing:0px;">2025-26</div>
<svg style="position:absolute;left:1200px;top:743.5px;" width="22" height="21" viewBox="0 0 22 21"><defs><linearGradient id="gck" x1="0" y1="0" x2="0" y2="1"><stop offset="0" stop-color="#8ed04e"/><stop offset="1" stop-color="#3f9a1e"/></linearGradient></defs><path d="M1 8.5 L4.5 7 L8.5 13 L19.5 1 L21 2.5 L9 20 L7.5 20z" fill="url(#gck)" stroke="#4a9a28" stroke-width="0.6"/></svg>
<svg style="position:absolute;left:1256px;top:743.5px;" width="22" height="21" viewBox="0 0 22 21"><defs><linearGradient id="gck" x1="0" y1="0" x2="0" y2="1"><stop offset="0" stop-color="#8ed04e"/><stop offset="1" stop-color="#3f9a1e"/></linearGradient></defs><path d="M1 8.5 L4.5 7 L8.5 13 L19.5 1 L21 2.5 L9 20 L7.5 20z" fill="url(#gck)" stroke="#4a9a28" stroke-width="0.6"/></svg>
<svg style="position:absolute;left:1311px;top:743.5px;" width="22" height="21" viewBox="0 0 22 21"><defs><linearGradient id="gck" x1="0" y1="0" x2="0" y2="1"><stop offset="0" stop-color="#8ed04e"/><stop offset="1" stop-color="#3f9a1e"/></linearGradient></defs><path d="M1 8.5 L4.5 7 L8.5 13 L19.5 1 L21 2.5 L9 20 L7.5 20z" fill="url(#gck)" stroke="#4a9a28" stroke-width="0.6"/></svg>
<svg style="position:absolute;left:1370px;top:745px;" width="17" height="17" viewBox="0 0 17 17"><path d="M3 3 L14 14 M14 3 L3 14" stroke="#c9574f" stroke-width="4.4" stroke-linecap="round"/><path d="M3 3 L14 14 M14 3 L3 14" stroke="#e87470" stroke-width="2.8" stroke-linecap="round"/></svg>
<svg style="position:absolute;left:1425px;top:745px;" width="17" height="17" viewBox="0 0 17 17"><path d="M3 3 L14 14 M14 3 L3 14" stroke="#c9574f" stroke-width="4.4" stroke-linecap="round"/><path d="M3 3 L14 14 M14 3 L3 14" stroke="#e87470" stroke-width="2.8" stroke-linecap="round"/></svg>
<svg style="position:absolute;left:1481px;top:745px;" width="17" height="17" viewBox="0 0 17 17"><path d="M3 3 L14 14 M14 3 L3 14" stroke="#c9574f" stroke-width="4.4" stroke-linecap="round"/><path d="M3 3 L14 14 M14 3 L3 14" stroke="#e87470" stroke-width="2.8" stroke-linecap="round"/></svg>
<svg style="position:absolute;left:1537px;top:745px;" width="17" height="17" viewBox="0 0 17 17"><path d="M3 3 L14 14 M14 3 L3 14" stroke="#c9574f" stroke-width="4.4" stroke-linecap="round"/><path d="M3 3 L14 14 M14 3 L3 14" stroke="#e87470" stroke-width="2.8" stroke-linecap="round"/></svg>
<div style="position:absolute;left:419px;top:769px;width:1160px;height:26px;background:#e3e3e3;"></div>
<div style="position:absolute;left:468px;top:769px;width:1px;height:26px;background:#d6d6d6;"></div>
<div style="position:absolute;left:530px;top:769px;width:1px;height:26px;background:#d6d6d6;"></div>
<div style="position:absolute;left:671px;top:769px;width:1px;height:26px;background:#d6d6d6;"></div>
<div style="position:absolute;left:811px;top:769px;width:1px;height:26px;background:#d6d6d6;"></div>
<div style="position:absolute;left:866px;top:769px;width:1px;height:26px;background:#d6d6d6;"></div>
<div style="position:absolute;left:1006px;top:769px;width:1px;height:26px;background:#d6d6d6;"></div>
<div style="position:absolute;left:1107px;top:769px;width:1px;height:26px;background:#d6d6d6;"></div>
<div style="position:absolute;left:1183px;top:769px;width:1px;height:26px;background:#d6d6d6;"></div>
<div style="position:absolute;left:1238px;top:769px;width:1px;height:26px;background:#d6d6d6;"></div>
<div style="position:absolute;left:1294px;top:769px;width:1px;height:26px;background:#d6d6d6;"></div>
<div style="position:absolute;left:1349px;top:769px;width:1px;height:26px;background:#d6d6d6;"></div>
<div style="position:absolute;left:1405px;top:769px;width:1px;height:26px;background:#d6d6d6;"></div>
<div style="position:absolute;left:1460px;top:769px;width:1px;height:26px;background:#d6d6d6;"></div>
<div style="position:absolute;left:1516px;top:769px;width:1px;height:26px;background:#d6d6d6;"></div>
<div style="position:absolute;left:1572px;top:769px;width:1px;height:26px;background:#d6d6d6;"></div>
<div style="position:absolute;left:432px;top:770px;width:26px;height:25px;box-sizing:border-box;background:#fff;border:1px solid #8c8c8c;border-bottom-color:#6e6e6e;box-shadow:inset 0 0 0 1px #a8a8a8, inset 0 0 0 2px #c4c4c4, inset 0 0 0 3px #e4e4e4;"></div>
<div style="position:absolute;left:474px;top:773px;white-space:nowrap;font:14px/18px 'Liberation Sans', sans-serif;color:#111;letter-spacing:0px;">4801</div>
<div style="position:absolute;left:536px;top:773px;white-space:nowrap;font:14px/18px 'Liberation Sans', sans-serif;color:#111;letter-spacing:0px;">P.E. Girls</div>
<div style="position:absolute;left:676px;top:773px;white-space:nowrap;font:14px/18px 'Liberation Sans', sans-serif;color:#111;letter-spacing:0px;">1188 - Mr. Camp</div>
<div style="position:absolute;left:802.5px;top:773px;width:60px;text-align:right;font:14px/18px 'Liberation Sans', sans-serif;color:#111;">0</div>
<div style="position:absolute;left:872.5px;top:773px;white-space:nowrap;font:14px/18px 'Liberation Sans', sans-serif;color:#111;letter-spacing:0.5px;">10 pt +/- (High)</div>
<div style="position:absolute;left:1012px;top:773px;white-space:nowrap;font:14px/18px 'Liberation Sans', sans-serif;color:#111;letter-spacing:0px;">Gymnasium</div>
<div style="position:absolute;left:1113.5px;top:773px;white-space:nowrap;font:14px/18px 'Liberation Sans', sans-serif;color:#111;letter-spacing:0px;">2026-27</div>
<svg style="position:absolute;left:1200px;top:769.5px;" width="22" height="21" viewBox="0 0 22 21"><defs><linearGradient id="gck" x1="0" y1="0" x2="0" y2="1"><stop offset="0" stop-color="#8ed04e"/><stop offset="1" stop-color="#3f9a1e"/></linearGradient></defs><path d="M1 8.5 L4.5 7 L8.5 13 L19.5 1 L21 2.5 L9 20 L7.5 20z" fill="url(#gck)" stroke="#4a9a28" stroke-width="0.6"/></svg>
<svg style="position:absolute;left:1256px;top:769.5px;" width="22" height="21" viewBox="0 0 22 21"><defs><linearGradient id="gck" x1="0" y1="0" x2="0" y2="1"><stop offset="0" stop-color="#8ed04e"/><stop offset="1" stop-color="#3f9a1e"/></linearGradient></defs><path d="M1 8.5 L4.5 7 L8.5 13 L19.5 1 L21 2.5 L9 20 L7.5 20z" fill="url(#gck)" stroke="#4a9a28" stroke-width="0.6"/></svg>
<svg style="position:absolute;left:1311px;top:769.5px;" width="22" height="21" viewBox="0 0 22 21"><defs><linearGradient id="gck" x1="0" y1="0" x2="0" y2="1"><stop offset="0" stop-color="#8ed04e"/><stop offset="1" stop-color="#3f9a1e"/></linearGradient></defs><path d="M1 8.5 L4.5 7 L8.5 13 L19.5 1 L21 2.5 L9 20 L7.5 20z" fill="url(#gck)" stroke="#4a9a28" stroke-width="0.6"/></svg>
<svg style="position:absolute;left:1370px;top:771px;" width="17" height="17" viewBox="0 0 17 17"><path d="M3 3 L14 14 M14 3 L3 14" stroke="#c9574f" stroke-width="4.4" stroke-linecap="round"/><path d="M3 3 L14 14 M14 3 L3 14" stroke="#e87470" stroke-width="2.8" stroke-linecap="round"/></svg>
<svg style="position:absolute;left:1425px;top:771px;" width="17" height="17" viewBox="0 0 17 17"><path d="M3 3 L14 14 M14 3 L3 14" stroke="#c9574f" stroke-width="4.4" stroke-linecap="round"/><path d="M3 3 L14 14 M14 3 L3 14" stroke="#e87470" stroke-width="2.8" stroke-linecap="round"/></svg>
<svg style="position:absolute;left:1481px;top:771px;" width="17" height="17" viewBox="0 0 17 17"><path d="M3 3 L14 14 M14 3 L3 14" stroke="#c9574f" stroke-width="4.4" stroke-linecap="round"/><path d="M3 3 L14 14 M14 3 L3 14" stroke="#e87470" stroke-width="2.8" stroke-linecap="round"/></svg>
<svg style="position:absolute;left:1537px;top:771px;" width="17" height="17" viewBox="0 0 17 17"><path d="M3 3 L14 14 M14 3 L3 14" stroke="#c9574f" stroke-width="4.4" stroke-linecap="round"/><path d="M3 3 L14 14 M14 3 L3 14" stroke="#e87470" stroke-width="2.8" stroke-linecap="round"/></svg>
<div style="position:absolute;left:419px;top:795px;width:1160px;height:26px;background:#ffffff;"></div>
<div style="position:absolute;left:468px;top:795px;width:1px;height:26px;background:#d6d6d6;"></div>
<div style="position:absolute;left:530px;top:795px;width:1px;height:26px;background:#d6d6d6;"></div>
<div style="position:absolute;left:671px;top:795px;width:1px;height:26px;background:#d6d6d6;"></div>
<div style="position:absolute;left:811px;top:795px;width:1px;height:26px;background:#d6d6d6;"></div>
<div style="position:absolute;left:866px;top:795px;width:1px;height:26px;background:#d6d6d6;"></div>
<div style="position:absolute;left:1006px;top:795px;width:1px;height:26px;background:#d6d6d6;"></div>
<div style="position:absolute;left:1107px;top:795px;width:1px;height:26px;background:#d6d6d6;"></div>
<div style="position:absolute;left:1183px;top:795px;width:1px;height:26px;background:#d6d6d6;"></div>
<div style="position:absolute;left:1238px;top:795px;width:1px;height:26px;background:#d6d6d6;"></div>
<div style="position:absolute;left:1294px;top:795px;width:1px;height:26px;background:#d6d6d6;"></div>
<div style="position:absolute;left:1349px;top:795px;width:1px;height:26px;background:#d6d6d6;"></div>
<div style="position:absolute;left:1405px;top:795px;width:1px;height:26px;background:#d6d6d6;"></div>
<div style="position:absolute;left:1460px;top:795px;width:1px;height:26px;background:#d6d6d6;"></div>
<div style="position:absolute;left:1516px;top:795px;width:1px;height:26px;background:#d6d6d6;"></div>
<div style="position:absolute;left:1572px;top:795px;width:1px;height:26px;background:#d6d6d6;"></div>
<div style="position:absolute;left:432px;top:796px;width:26px;height:25px;box-sizing:border-box;background:#fff;border:1px solid #8c8c8c;border-bottom-color:#6e6e6e;box-shadow:inset 0 0 0 1px #a8a8a8, inset 0 0 0 2px #c4c4c4, inset 0 0 0 3px #e4e4e4;"></div>
<div style="position:absolute;left:474px;top:799px;white-space:nowrap;font:14px/18px 'Liberation Sans', sans-serif;color:#111;letter-spacing:0px;">4855</div>
<div style="position:absolute;left:536px;top:799px;white-space:nowrap;font:14px/18px 'Liberation Sans', sans-serif;color:#111;letter-spacing:0px;">P.E. Girls</div>
<div style="position:absolute;left:676px;top:799px;white-space:nowrap;font:14px/18px 'Liberation Sans', sans-serif;color:#111;letter-spacing:0px;">1188 - Mr. Camp</div>
<div style="position:absolute;left:802.5px;top:799px;width:60px;text-align:right;font:14px/18px 'Liberation Sans', sans-serif;color:#111;">2</div>
<div style="position:absolute;left:872.5px;top:799px;white-space:nowrap;font:14px/18px 'Liberation Sans', sans-serif;color:#111;letter-spacing:0.5px;">10 pt +/- (High)</div>
<div style="position:absolute;left:1012px;top:799px;white-space:nowrap;font:14px/18px 'Liberation Sans', sans-serif;color:#111;letter-spacing:0px;">Gymnasium</div>
<div style="position:absolute;left:1113.5px;top:799px;white-space:nowrap;font:14px/18px 'Liberation Sans', sans-serif;color:#111;letter-spacing:0px;">2025-26</div>
<svg style="position:absolute;left:1200px;top:795.5px;" width="22" height="21" viewBox="0 0 22 21"><defs><linearGradient id="gck" x1="0" y1="0" x2="0" y2="1"><stop offset="0" stop-color="#8ed04e"/><stop offset="1" stop-color="#3f9a1e"/></linearGradient></defs><path d="M1 8.5 L4.5 7 L8.5 13 L19.5 1 L21 2.5 L9 20 L7.5 20z" fill="url(#gck)" stroke="#4a9a28" stroke-width="0.6"/></svg>
<svg style="position:absolute;left:1256px;top:795.5px;" width="22" height="21" viewBox="0 0 22 21"><defs><linearGradient id="gck" x1="0" y1="0" x2="0" y2="1"><stop offset="0" stop-color="#8ed04e"/><stop offset="1" stop-color="#3f9a1e"/></linearGradient></defs><path d="M1 8.5 L4.5 7 L8.5 13 L19.5 1 L21 2.5 L9 20 L7.5 20z" fill="url(#gck)" stroke="#4a9a28" stroke-width="0.6"/></svg>
<svg style="position:absolute;left:1311px;top:795.5px;" width="22" height="21" viewBox="0 0 22 21"><defs><linearGradient id="gck" x1="0" y1="0" x2="0" y2="1"><stop offset="0" stop-color="#8ed04e"/><stop offset="1" stop-color="#3f9a1e"/></linearGradient></defs><path d="M1 8.5 L4.5 7 L8.5 13 L19.5 1 L21 2.5 L9 20 L7.5 20z" fill="url(#gck)" stroke="#4a9a28" stroke-width="0.6"/></svg>
<svg style="position:absolute;left:1368px;top:795.5px;" width="22" height="21" viewBox="0 0 22 21"><defs><linearGradient id="gck" x1="0" y1="0" x2="0" y2="1"><stop offset="0" stop-color="#8ed04e"/><stop offset="1" stop-color="#3f9a1e"/></linearGradient></defs><path d="M1 8.5 L4.5 7 L8.5 13 L19.5 1 L21 2.5 L9 20 L7.5 20z" fill="url(#gck)" stroke="#4a9a28" stroke-width="0.6"/></svg>
<svg style="position:absolute;left:1425px;top:797px;" width="17" height="17" viewBox="0 0 17 17"><path d="M3 3 L14 14 M14 3 L3 14" stroke="#c9574f" stroke-width="4.4" stroke-linecap="round"/><path d="M3 3 L14 14 M14 3 L3 14" stroke="#e87470" stroke-width="2.8" stroke-linecap="round"/></svg>
<svg style="position:absolute;left:1481px;top:797px;" width="17" height="17" viewBox="0 0 17 17"><path d="M3 3 L14 14 M14 3 L3 14" stroke="#c9574f" stroke-width="4.4" stroke-linecap="round"/><path d="M3 3 L14 14 M14 3 L3 14" stroke="#e87470" stroke-width="2.8" stroke-linecap="round"/></svg>
<svg style="position:absolute;left:1537px;top:797px;" width="17" height="17" viewBox="0 0 17 17"><path d="M3 3 L14 14 M14 3 L3 14" stroke="#c9574f" stroke-width="4.4" stroke-linecap="round"/><path d="M3 3 L14 14 M14 3 L3 14" stroke="#e87470" stroke-width="2.8" stroke-linecap="round"/></svg>
<div style="position:absolute;left:419px;top:821px;width:1160px;height:26px;background:#e3e3e3;"></div>
<div style="position:absolute;left:468px;top:821px;width:1px;height:26px;background:#d6d6d6;"></div>
<div style="position:absolute;left:530px;top:821px;width:1px;height:26px;background:#d6d6d6;"></div>
<div style="position:absolute;left:671px;top:821px;width:1px;height:26px;background:#d6d6d6;"></div>
<div style="position:absolute;left:811px;top:821px;width:1px;height:26px;background:#d6d6d6;"></div>
<div style="position:absolute;left:866px;top:821px;width:1px;height:26px;background:#d6d6d6;"></div>
<div style="position:absolute;left:1006px;top:821px;width:1px;height:26px;background:#d6d6d6;"></div>
<div style="position:absolute;left:1107px;top:821px;width:1px;height:26px;background:#d6d6d6;"></div>
<div style="position:absolute;left:1183px;top:821px;width:1px;height:26px;background:#d6d6d6;"></div>
<div style="position:absolute;left:1238px;top:821px;width:1px;height:26px;background:#d6d6d6;"></div>
<div style="position:absolute;left:1294px;top:821px;width:1px;height:26px;background:#d6d6d6;"></div>
<div style="position:absolute;left:1349px;top:821px;width:1px;height:26px;background:#d6d6d6;"></div>
<div style="position:absolute;left:1405px;top:821px;width:1px;height:26px;background:#d6d6d6;"></div>
<div style="position:absolute;left:1460px;top:821px;width:1px;height:26px;background:#d6d6d6;"></div>
<div style="position:absolute;left:1516px;top:821px;width:1px;height:26px;background:#d6d6d6;"></div>
<div style="position:absolute;left:1572px;top:821px;width:1px;height:26px;background:#d6d6d6;"></div>
<div style="position:absolute;left:432px;top:822px;width:26px;height:25px;box-sizing:border-box;background:#fff;border:1px solid #8c8c8c;border-bottom-color:#6e6e6e;box-shadow:inset 0 0 0 1px #a8a8a8, inset 0 0 0 2px #c4c4c4, inset 0 0 0 3px #e4e4e4;"></div>
<svg style="position:absolute;left:432px;top:821px;" width="26" height="26" viewBox="0 0 26 26"><path d="M4 13.5 L8 11 L12 17 L23 1.5 L25 3.5 L12 24 L11 24z" fill="#000"/></svg>
<div style="position:absolute;left:474px;top:825px;white-space:nowrap;font:14px/18px 'Liberation Sans', sans-serif;color:#111;letter-spacing:0px;">4726</div>
<div style="position:absolute;left:536px;top:825px;white-space:nowrap;font:14px/18px 'Liberation Sans', sans-serif;color:#111;letter-spacing:0px;">.Learning Center</div>
<div style="position:absolute;left:676px;top:825px;white-space:nowrap;font:14px/18px 'Liberation Sans', sans-serif;color:#111;letter-spacing:0px;">949 - Mr. McGaha</div>
<div style="position:absolute;left:802.5px;top:825px;width:60px;text-align:right;font:14px/18px 'Liberation Sans', sans-serif;color:#111;">1</div>
<div style="position:absolute;left:872.5px;top:825px;white-space:nowrap;font:14px/18px 'Liberation Sans', sans-serif;color:#111;letter-spacing:0.3px;">ACE</div>
<div style="position:absolute;left:1012px;top:825px;white-space:nowrap;font:14px/18px 'Liberation Sans', sans-serif;color:#111;letter-spacing:0px;"></div>
<div style="position:absolute;left:1113.5px;top:825px;white-space:nowrap;font:14px/18px 'Liberation Sans', sans-serif;color:#111;letter-spacing:0px;">2025-26</div>
<svg style="position:absolute;left:1200px;top:821.5px;" width="22" height="21" viewBox="0 0 22 21"><defs><linearGradient id="gck" x1="0" y1="0" x2="0" y2="1"><stop offset="0" stop-color="#8ed04e"/><stop offset="1" stop-color="#3f9a1e"/></linearGradient></defs><path d="M1 8.5 L4.5 7 L8.5 13 L19.5 1 L21 2.5 L9 20 L7.5 20z" fill="url(#gck)" stroke="#4a9a28" stroke-width="0.6"/></svg>
<svg style="position:absolute;left:1256px;top:821.5px;" width="22" height="21" viewBox="0 0 22 21"><defs><linearGradient id="gck" x1="0" y1="0" x2="0" y2="1"><stop offset="0" stop-color="#8ed04e"/><stop offset="1" stop-color="#3f9a1e"/></linearGradient></defs><path d="M1 8.5 L4.5 7 L8.5 13 L19.5 1 L21 2.5 L9 20 L7.5 20z" fill="url(#gck)" stroke="#4a9a28" stroke-width="0.6"/></svg>
<svg style="position:absolute;left:1311px;top:821.5px;" width="22" height="21" viewBox="0 0 22 21"><defs><linearGradient id="gck" x1="0" y1="0" x2="0" y2="1"><stop offset="0" stop-color="#8ed04e"/><stop offset="1" stop-color="#3f9a1e"/></linearGradient></defs><path d="M1 8.5 L4.5 7 L8.5 13 L19.5 1 L21 2.5 L9 20 L7.5 20z" fill="url(#gck)" stroke="#4a9a28" stroke-width="0.6"/></svg>
<svg style="position:absolute;left:1368px;top:821.5px;" width="22" height="21" viewBox="0 0 22 21"><defs><linearGradient id="gck" x1="0" y1="0" x2="0" y2="1"><stop offset="0" stop-color="#8ed04e"/><stop offset="1" stop-color="#3f9a1e"/></linearGradient></defs><path d="M1 8.5 L4.5 7 L8.5 13 L19.5 1 L21 2.5 L9 20 L7.5 20z" fill="url(#gck)" stroke="#4a9a28" stroke-width="0.6"/></svg>
<svg style="position:absolute;left:1423px;top:821.5px;" width="22" height="21" viewBox="0 0 22 21"><defs><linearGradient id="gck" x1="0" y1="0" x2="0" y2="1"><stop offset="0" stop-color="#8ed04e"/><stop offset="1" stop-color="#3f9a1e"/></linearGradient></defs><path d="M1 8.5 L4.5 7 L8.5 13 L19.5 1 L21 2.5 L9 20 L7.5 20z" fill="url(#gck)" stroke="#4a9a28" stroke-width="0.6"/></svg>
<svg style="position:absolute;left:1478px;top:821.5px;" width="22" height="21" viewBox="0 0 22 21"><defs><linearGradient id="gck" x1="0" y1="0" x2="0" y2="1"><stop offset="0" stop-color="#8ed04e"/><stop offset="1" stop-color="#3f9a1e"/></linearGradient></defs><path d="M1 8.5 L4.5 7 L8.5 13 L19.5 1 L21 2.5 L9 20 L7.5 20z" fill="url(#gck)" stroke="#4a9a28" stroke-width="0.6"/></svg>
<svg style="position:absolute;left:1534px;top:821.5px;" width="22" height="21" viewBox="0 0 22 21"><defs><linearGradient id="gck" x1="0" y1="0" x2="0" y2="1"><stop offset="0" stop-color="#8ed04e"/><stop offset="1" stop-color="#3f9a1e"/></linearGradient></defs><path d="M1 8.5 L4.5 7 L8.5 13 L19.5 1 L21 2.5 L9 20 L7.5 20z" fill="url(#gck)" stroke="#4a9a28" stroke-width="0.6"/></svg>
<div style="position:absolute;left:419px;top:847px;width:1160px;height:26px;background:#ffffff;"></div>
<div style="position:absolute;left:468px;top:847px;width:1px;height:26px;background:#d6d6d6;"></div>
<div style="position:absolute;left:530px;top:847px;width:1px;height:26px;background:#d6d6d6;"></div>
<div style="position:absolute;left:671px;top:847px;width:1px;height:26px;background:#d6d6d6;"></div>
<div style="position:absolute;left:811px;top:847px;width:1px;height:26px;background:#d6d6d6;"></div>
<div style="position:absolute;left:866px;top:847px;width:1px;height:26px;background:#d6d6d6;"></div>
<div style="position:absolute;left:1006px;top:847px;width:1px;height:26px;background:#d6d6d6;"></div>
<div style="position:absolute;left:1107px;top:847px;width:1px;height:26px;background:#d6d6d6;"></div>
<div style="position:absolute;left:1183px;top:847px;width:1px;height:26px;background:#d6d6d6;"></div>
<div style="position:absolute;left:1238px;top:847px;width:1px;height:26px;background:#d6d6d6;"></div>
<div style="position:absolute;left:1294px;top:847px;width:1px;height:26px;background:#d6d6d6;"></div>
<div style="position:absolute;left:1349px;top:847px;width:1px;height:26px;background:#d6d6d6;"></div>
<div style="position:absolute;left:1405px;top:847px;width:1px;height:26px;background:#d6d6d6;"></div>
<div style="position:absolute;left:1460px;top:847px;width:1px;height:26px;background:#d6d6d6;"></div>
<div style="position:absolute;left:1516px;top:847px;width:1px;height:26px;background:#d6d6d6;"></div>
<div style="position:absolute;left:1572px;top:847px;width:1px;height:26px;background:#d6d6d6;"></div>
<div style="position:absolute;left:432px;top:848px;width:26px;height:25px;box-sizing:border-box;background:#fff;border:1px solid #8c8c8c;border-bottom-color:#6e6e6e;box-shadow:inset 0 0 0 1px #a8a8a8, inset 0 0 0 2px #c4c4c4, inset 0 0 0 3px #e4e4e4;"></div>
<svg style="position:absolute;left:432px;top:847px;" width="26" height="26" viewBox="0 0 26 26"><path d="M4 13.5 L8 11 L12 17 L23 1.5 L25 3.5 L12 24 L11 24z" fill="#000"/></svg>
<div style="position:absolute;left:474px;top:851px;white-space:nowrap;font:14px/18px 'Liberation Sans', sans-serif;color:#111;letter-spacing:0px;">4740</div>
<div style="position:absolute;left:536px;top:851px;white-space:nowrap;font:14px/18px 'Liberation Sans', sans-serif;color:#111;letter-spacing:0px;">.Learning Center</div>
<div style="position:absolute;left:676px;top:851px;white-space:nowrap;font:14px/18px 'Liberation Sans', sans-serif;color:#111;letter-spacing:0px;">1222 - Ms. Patti</div>
<div style="position:absolute;left:802.5px;top:851px;width:60px;text-align:right;font:14px/18px 'Liberation Sans', sans-serif;color:#111;">0</div>
<div style="position:absolute;left:872.5px;top:851px;white-space:nowrap;font:14px/18px 'Liberation Sans', sans-serif;color:#111;letter-spacing:0.3px;">ACE</div>
<div style="position:absolute;left:1012px;top:851px;white-space:nowrap;font:14px/18px 'Liberation Sans', sans-serif;color:#111;letter-spacing:0px;"></div>
<div style="position:absolute;left:1113.5px;top:851px;white-space:nowrap;font:14px/18px 'Liberation Sans', sans-serif;color:#111;letter-spacing:0px;">2025-26</div>
<svg style="position:absolute;left:1200px;top:847.5px;" width="22" height="21" viewBox="0 0 22 21"><defs><linearGradient id="gck" x1="0" y1="0" x2="0" y2="1"><stop offset="0" stop-color="#8ed04e"/><stop offset="1" stop-color="#3f9a1e"/></linearGradient></defs><path d="M1 8.5 L4.5 7 L8.5 13 L19.5 1 L21 2.5 L9 20 L7.5 20z" fill="url(#gck)" stroke="#4a9a28" stroke-width="0.6"/></svg>
<svg style="position:absolute;left:1256px;top:847.5px;" width="22" height="21" viewBox="0 0 22 21"><defs><linearGradient id="gck" x1="0" y1="0" x2="0" y2="1"><stop offset="0" stop-color="#8ed04e"/><stop offset="1" stop-color="#3f9a1e"/></linearGradient></defs><path d="M1 8.5 L4.5 7 L8.5 13 L19.5 1 L21 2.5 L9 20 L7.5 20z" fill="url(#gck)" stroke="#4a9a28" stroke-width="0.6"/></svg>
<svg style="position:absolute;left:1311px;top:847.5px;" width="22" height="21" viewBox="0 0 22 21"><defs><linearGradient id="gck" x1="0" y1="0" x2="0" y2="1"><stop offset="0" stop-color="#8ed04e"/><stop offset="1" stop-color="#3f9a1e"/></linearGradient></defs><path d="M1 8.5 L4.5 7 L8.5 13 L19.5 1 L21 2.5 L9 20 L7.5 20z" fill="url(#gck)" stroke="#4a9a28" stroke-width="0.6"/></svg>
<svg style="position:absolute;left:1368px;top:847.5px;" width="22" height="21" viewBox="0 0 22 21"><defs><linearGradient id="gck" x1="0" y1="0" x2="0" y2="1"><stop offset="0" stop-color="#8ed04e"/><stop offset="1" stop-color="#3f9a1e"/></linearGradient></defs><path d="M1 8.5 L4.5 7 L8.5 13 L19.5 1 L21 2.5 L9 20 L7.5 20z" fill="url(#gck)" stroke="#4a9a28" stroke-width="0.6"/></svg>
<svg style="position:absolute;left:1423px;top:847.5px;" width="22" height="21" viewBox="0 0 22 21"><defs><linearGradient id="gck" x1="0" y1="0" x2="0" y2="1"><stop offset="0" stop-color="#8ed04e"/><stop offset="1" stop-color="#3f9a1e"/></linearGradient></defs><path d="M1 8.5 L4.5 7 L8.5 13 L19.5 1 L21 2.5 L9 20 L7.5 20z" fill="url(#gck)" stroke="#4a9a28" stroke-width="0.6"/></svg>
<svg style="position:absolute;left:1478px;top:847.5px;" width="22" height="21" viewBox="0 0 22 21"><defs><linearGradient id="gck" x1="0" y1="0" x2="0" y2="1"><stop offset="0" stop-color="#8ed04e"/><stop offset="1" stop-color="#3f9a1e"/></linearGradient></defs><path d="M1 8.5 L4.5 7 L8.5 13 L19.5 1 L21 2.5 L9 20 L7.5 20z" fill="url(#gck)" stroke="#4a9a28" stroke-width="0.6"/></svg>
<svg style="position:absolute;left:1534px;top:847.5px;" width="22" height="21" viewBox="0 0 22 21"><defs><linearGradient id="gck" x1="0" y1="0" x2="0" y2="1"><stop offset="0" stop-color="#8ed04e"/><stop offset="1" stop-color="#3f9a1e"/></linearGradient></defs><path d="M1 8.5 L4.5 7 L8.5 13 L19.5 1 L21 2.5 L9 20 L7.5 20z" fill="url(#gck)" stroke="#4a9a28" stroke-width="0.6"/></svg>
<div style="position:absolute;left:419px;top:873px;width:1160px;height:26px;background:#e3e3e3;"></div>
<div style="position:absolute;left:468px;top:873px;width:1px;height:26px;background:#d6d6d6;"></div>
<div style="position:absolute;left:530px;top:873px;width:1px;height:26px;background:#d6d6d6;"></div>
<div style="position:absolute;left:671px;top:873px;width:1px;height:26px;background:#d6d6d6;"></div>
<div style="position:absolute;left:811px;top:873px;width:1px;height:26px;background:#d6d6d6;"></div>
<div style="position:absolute;left:866px;top:873px;width:1px;height:26px;background:#d6d6d6;"></div>
<div style="position:absolute;left:1006px;top:873px;width:1px;height:26px;background:#d6d6d6;"></div>
<div style="position:absolute;left:1107px;top:873px;width:1px;height:26px;background:#d6d6d6;"></div>
<div style="position:absolute;left:1183px;top:873px;width:1px;height:26px;background:#d6d6d6;"></div>
<div style="position:absolute;left:1238px;top:873px;width:1px;height:26px;background:#d6d6d6;"></div>
<div style="position:absolute;left:1294px;top:873px;width:1px;height:26px;background:#d6d6d6;"></div>
<div style="position:absolute;left:1349px;top:873px;width:1px;height:26px;background:#d6d6d6;"></div>
<div style="position:absolute;left:1405px;top:873px;width:1px;height:26px;background:#d6d6d6;"></div>
<div style="position:absolute;left:1460px;top:873px;width:1px;height:26px;background:#d6d6d6;"></div>
<div style="position:absolute;left:1516px;top:873px;width:1px;height:26px;background:#d6d6d6;"></div>
<div style="position:absolute;left:1572px;top:873px;width:1px;height:26px;background:#d6d6d6;"></div>
<div style="position:absolute;left:432px;top:874px;width:26px;height:25px;box-sizing:border-box;background:#fff;border:1px solid #8c8c8c;border-bottom-color:#6e6e6e;box-shadow:inset 0 0 0 1px #a8a8a8, inset 0 0 0 2px #c4c4c4, inset 0 0 0 3px #e4e4e4;"></div>
<svg style="position:absolute;left:432px;top:873px;" width="26" height="26" viewBox="0 0 26 26"><path d="M4 13.5 L8 11 L12 17 L23 1.5 L25 3.5 L12 24 L11 24z" fill="#000"/></svg>
<div style="position:absolute;left:474px;top:877px;white-space:nowrap;font:14px/18px 'Liberation Sans', sans-serif;color:#111;letter-spacing:0px;">4768</div>
<div style="position:absolute;left:536px;top:877px;white-space:nowrap;font:14px/18px 'Liberation Sans', sans-serif;color:#111;letter-spacing:0px;">.Learning Center</div>
<div style="position:absolute;left:676px;top:877px;white-space:nowrap;font:14px/18px 'Liberation Sans', sans-serif;color:#111;letter-spacing:0px;">900 - Mrs. Carnahan</div>
<div style="position:absolute;left:802.5px;top:877px;width:60px;text-align:right;font:14px/18px 'Liberation Sans', sans-serif;color:#111;">2</div>
<div style="position:absolute;left:872.5px;top:877px;white-space:nowrap;font:14px/18px 'Liberation Sans', sans-serif;color:#111;letter-spacing:0.3px;">ACE</div>
<div style="position:absolute;left:1012px;top:877px;white-space:nowrap;font:14px/18px 'Liberation Sans', sans-serif;color:#111;letter-spacing:0px;">C-109</div>
<div style="position:absolute;left:1113.5px;top:877px;white-space:nowrap;font:14px/18px 'Liberation Sans', sans-serif;color:#111;letter-spacing:0px;">2025-26</div>
<svg style="position:absolute;left:1200px;top:873.5px;" width="22" height="21" viewBox="0 0 22 21"><defs><linearGradient id="gck" x1="0" y1="0" x2="0" y2="1"><stop offset="0" stop-color="#8ed04e"/><stop offset="1" stop-color="#3f9a1e"/></linearGradient></defs><path d="M1 8.5 L4.5 7 L8.5 13 L19.5 1 L21 2.5 L9 20 L7.5 20z" fill="url(#gck)" stroke="#4a9a28" stroke-width="0.6"/></svg>
<svg style="position:absolute;left:1256px;top:873.5px;" width="22" height="21" viewBox="0 0 22 21"><defs><linearGradient id="gck" x1="0" y1="0" x2="0" y2="1"><stop offset="0" stop-color="#8ed04e"/><stop offset="1" stop-color="#3f9a1e"/></linearGradient></defs><path d="M1 8.5 L4.5 7 L8.5 13 L19.5 1 L21 2.5 L9 20 L7.5 20z" fill="url(#gck)" stroke="#4a9a28" stroke-width="0.6"/></svg>
<svg style="position:absolute;left:1311px;top:873.5px;" width="22" height="21" viewBox="0 0 22 21"><defs><linearGradient id="gck" x1="0" y1="0" x2="0" y2="1"><stop offset="0" stop-color="#8ed04e"/><stop offset="1" stop-color="#3f9a1e"/></linearGradient></defs><path d="M1 8.5 L4.5 7 L8.5 13 L19.5 1 L21 2.5 L9 20 L7.5 20z" fill="url(#gck)" stroke="#4a9a28" stroke-width="0.6"/></svg>
<svg style="position:absolute;left:1368px;top:873.5px;" width="22" height="21" viewBox="0 0 22 21"><defs><linearGradient id="gck" x1="0" y1="0" x2="0" y2="1"><stop offset="0" stop-color="#8ed04e"/><stop offset="1" stop-color="#3f9a1e"/></linearGradient></defs><path d="M1 8.5 L4.5 7 L8.5 13 L19.5 1 L21 2.5 L9 20 L7.5 20z" fill="url(#gck)" stroke="#4a9a28" stroke-width="0.6"/></svg>
<svg style="position:absolute;left:1423px;top:873.5px;" width="22" height="21" viewBox="0 0 22 21"><defs><linearGradient id="gck" x1="0" y1="0" x2="0" y2="1"><stop offset="0" stop-color="#8ed04e"/><stop offset="1" stop-color="#3f9a1e"/></linearGradient></defs><path d="M1 8.5 L4.5 7 L8.5 13 L19.5 1 L21 2.5 L9 20 L7.5 20z" fill="url(#gck)" stroke="#4a9a28" stroke-width="0.6"/></svg>
<svg style="position:absolute;left:1478px;top:873.5px;" width="22" height="21" viewBox="0 0 22 21"><defs><linearGradient id="gck" x1="0" y1="0" x2="0" y2="1"><stop offset="0" stop-color="#8ed04e"/><stop offset="1" stop-color="#3f9a1e"/></linearGradient></defs><path d="M1 8.5 L4.5 7 L8.5 13 L19.5 1 L21 2.5 L9 20 L7.5 20z" fill="url(#gck)" stroke="#4a9a28" stroke-width="0.6"/></svg>
<svg style="position:absolute;left:1537px;top:875px;" width="17" height="17" viewBox="0 0 17 17"><path d="M3 3 L14 14 M14 3 L3 14" stroke="#c9574f" stroke-width="4.4" stroke-linecap="round"/><path d="M3 3 L14 14 M14 3 L3 14" stroke="#e87470" stroke-width="2.8" stroke-linecap="round"/></svg>
<div style="position:absolute;left:419px;top:899px;width:1160px;height:26px;background:#ffffff;"></div>
<div style="position:absolute;left:468px;top:899px;width:1px;height:26px;background:#d6d6d6;"></div>
<div style="position:absolute;left:530px;top:899px;width:1px;height:26px;background:#d6d6d6;"></div>
<div style="position:absolute;left:671px;top:899px;width:1px;height:26px;background:#d6d6d6;"></div>
<div style="position:absolute;left:811px;top:899px;width:1px;height:26px;background:#d6d6d6;"></div>
<div style="position:absolute;left:866px;top:899px;width:1px;height:26px;background:#d6d6d6;"></div>
<div style="position:absolute;left:1006px;top:899px;width:1px;height:26px;background:#d6d6d6;"></div>
<div style="position:absolute;left:1107px;top:899px;width:1px;height:26px;background:#d6d6d6;"></div>
<div style="position:absolute;left:1183px;top:899px;width:1px;height:26px;background:#d6d6d6;"></div>
<div style="position:absolute;left:1238px;top:899px;width:1px;height:26px;background:#d6d6d6;"></div>
<div style="position:absolute;left:1294px;top:899px;width:1px;height:26px;background:#d6d6d6;"></div>
<div style="position:absolute;left:1349px;top:899px;width:1px;height:26px;background:#d6d6d6;"></div>
<div style="position:absolute;left:1405px;top:899px;width:1px;height:26px;background:#d6d6d6;"></div>
<div style="position:absolute;left:1460px;top:899px;width:1px;height:26px;background:#d6d6d6;"></div>
<div style="position:absolute;left:1516px;top:899px;width:1px;height:26px;background:#d6d6d6;"></div>
<div style="position:absolute;left:1572px;top:899px;width:1px;height:26px;background:#d6d6d6;"></div>
<div style="position:absolute;left:432px;top:900px;width:26px;height:25px;box-sizing:border-box;background:#fff;border:1px solid #8c8c8c;border-bottom-color:#6e6e6e;box-shadow:inset 0 0 0 1px #a8a8a8, inset 0 0 0 2px #c4c4c4, inset 0 0 0 3px #e4e4e4;"></div>
<div style="position:absolute;left:474px;top:903px;white-space:nowrap;font:14px/18px 'Liberation Sans', sans-serif;color:#111;letter-spacing:0px;">4831</div>
<div style="position:absolute;left:536px;top:903px;white-space:nowrap;font:14px/18px 'Liberation Sans', sans-serif;color:#111;letter-spacing:0px;">.Learning Center</div>
<div style="position:absolute;left:676px;top:903px;white-space:nowrap;font:14px/18px 'Liberation Sans', sans-serif;color:#111;letter-spacing:0px;">949 - Mr. McGaha</div>
<div style="position:absolute;left:802.5px;top:903px;width:60px;text-align:right;font:14px/18px 'Liberation Sans', sans-serif;color:#111;">0</div>
<div style="position:absolute;left:872.5px;top:903px;white-space:nowrap;font:14px/18px 'Liberation Sans', sans-serif;color:#111;letter-spacing:0.3px;">ACE</div>
<div style="position:absolute;left:1012px;top:903px;white-space:nowrap;font:14px/18px 'Liberation Sans', sans-serif;color:#111;letter-spacing:0px;"></div>
<div style="position:absolute;left:1113.5px;top:903px;white-space:nowrap;font:14px/18px 'Liberation Sans', sans-serif;color:#111;letter-spacing:0px;">2026-27</div>
<svg style="position:absolute;left:1200px;top:899.5px;" width="22" height="21" viewBox="0 0 22 21"><defs><linearGradient id="gck" x1="0" y1="0" x2="0" y2="1"><stop offset="0" stop-color="#8ed04e"/><stop offset="1" stop-color="#3f9a1e"/></linearGradient></defs><path d="M1 8.5 L4.5 7 L8.5 13 L19.5 1 L21 2.5 L9 20 L7.5 20z" fill="url(#gck)" stroke="#4a9a28" stroke-width="0.6"/></svg>
<svg style="position:absolute;left:1256px;top:899.5px;" width="22" height="21" viewBox="0 0 22 21"><defs><linearGradient id="gck" x1="0" y1="0" x2="0" y2="1"><stop offset="0" stop-color="#8ed04e"/><stop offset="1" stop-color="#3f9a1e"/></linearGradient></defs><path d="M1 8.5 L4.5 7 L8.5 13 L19.5 1 L21 2.5 L9 20 L7.5 20z" fill="url(#gck)" stroke="#4a9a28" stroke-width="0.6"/></svg>
<svg style="position:absolute;left:1311px;top:899.5px;" width="22" height="21" viewBox="0 0 22 21"><defs><linearGradient id="gck" x1="0" y1="0" x2="0" y2="1"><stop offset="0" stop-color="#8ed04e"/><stop offset="1" stop-color="#3f9a1e"/></linearGradient></defs><path d="M1 8.5 L4.5 7 L8.5 13 L19.5 1 L21 2.5 L9 20 L7.5 20z" fill="url(#gck)" stroke="#4a9a28" stroke-width="0.6"/></svg>
<svg style="position:absolute;left:1368px;top:899.5px;" width="22" height="21" viewBox="0 0 22 21"><defs><linearGradient id="gck" x1="0" y1="0" x2="0" y2="1"><stop offset="0" stop-color="#8ed04e"/><stop offset="1" stop-color="#3f9a1e"/></linearGradient></defs><path d="M1 8.5 L4.5 7 L8.5 13 L19.5 1 L21 2.5 L9 20 L7.5 20z" fill="url(#gck)" stroke="#4a9a28" stroke-width="0.6"/></svg>
<svg style="position:absolute;left:1423px;top:899.5px;" width="22" height="21" viewBox="0 0 22 21"><defs><linearGradient id="gck" x1="0" y1="0" x2="0" y2="1"><stop offset="0" stop-color="#8ed04e"/><stop offset="1" stop-color="#3f9a1e"/></linearGradient></defs><path d="M1 8.5 L4.5 7 L8.5 13 L19.5 1 L21 2.5 L9 20 L7.5 20z" fill="url(#gck)" stroke="#4a9a28" stroke-width="0.6"/></svg>
<svg style="position:absolute;left:1478px;top:899.5px;" width="22" height="21" viewBox="0 0 22 21"><defs><linearGradient id="gck" x1="0" y1="0" x2="0" y2="1"><stop offset="0" stop-color="#8ed04e"/><stop offset="1" stop-color="#3f9a1e"/></linearGradient></defs><path d="M1 8.5 L4.5 7 L8.5 13 L19.5 1 L21 2.5 L9 20 L7.5 20z" fill="url(#gck)" stroke="#4a9a28" stroke-width="0.6"/></svg>
<svg style="position:absolute;left:1534px;top:899.5px;" width="22" height="21" viewBox="0 0 22 21"><defs><linearGradient id="gck" x1="0" y1="0" x2="0" y2="1"><stop offset="0" stop-color="#8ed04e"/><stop offset="1" stop-color="#3f9a1e"/></linearGradient></defs><path d="M1 8.5 L4.5 7 L8.5 13 L19.5 1 L21 2.5 L9 20 L7.5 20z" fill="url(#gck)" stroke="#4a9a28" stroke-width="0.6"/></svg>
<div style="position:absolute;left:419px;top:925px;width:1160px;height:26px;background:#e3e3e3;"></div>
<div style="position:absolute;left:468px;top:925px;width:1px;height:26px;background:#d6d6d6;"></div>
<div style="position:absolute;left:530px;top:925px;width:1px;height:26px;background:#d6d6d6;"></div>
<div style="position:absolute;left:671px;top:925px;width:1px;height:26px;background:#d6d6d6;"></div>
<div style="position:absolute;left:811px;top:925px;width:1px;height:26px;background:#d6d6d6;"></div>
<div style="position:absolute;left:866px;top:925px;width:1px;height:26px;background:#d6d6d6;"></div>
<div style="position:absolute;left:1006px;top:925px;width:1px;height:26px;background:#d6d6d6;"></div>
<div style="position:absolute;left:1107px;top:925px;width:1px;height:26px;background:#d6d6d6;"></div>
<div style="position:absolute;left:1183px;top:925px;width:1px;height:26px;background:#d6d6d6;"></div>
<div style="position:absolute;left:1238px;top:925px;width:1px;height:26px;background:#d6d6d6;"></div>
<div style="position:absolute;left:1294px;top:925px;width:1px;height:26px;background:#d6d6d6;"></div>
<div style="position:absolute;left:1349px;top:925px;width:1px;height:26px;background:#d6d6d6;"></div>
<div style="position:absolute;left:1405px;top:925px;width:1px;height:26px;background:#d6d6d6;"></div>
<div style="position:absolute;left:1460px;top:925px;width:1px;height:26px;background:#d6d6d6;"></div>
<div style="position:absolute;left:1516px;top:925px;width:1px;height:26px;background:#d6d6d6;"></div>
<div style="position:absolute;left:1572px;top:925px;width:1px;height:26px;background:#d6d6d6;"></div>
<div style="position:absolute;left:432px;top:926px;width:26px;height:25px;box-sizing:border-box;background:#fff;border:1px solid #8c8c8c;border-bottom-color:#6e6e6e;box-shadow:inset 0 0 0 1px #a8a8a8, inset 0 0 0 2px #c4c4c4, inset 0 0 0 3px #e4e4e4;"></div>
<div style="position:absolute;left:474px;top:929px;white-space:nowrap;font:14px/18px 'Liberation Sans', sans-serif;color:#111;letter-spacing:0px;">4835</div>
<div style="position:absolute;left:536px;top:929px;white-space:nowrap;font:14px/18px 'Liberation Sans', sans-serif;color:#111;letter-spacing:0px;">.Learning Center</div>
<div style="position:absolute;left:676px;top:929px;white-space:nowrap;font:14px/18px 'Liberation Sans', sans-serif;color:#111;letter-spacing:0px;">1222 - Ms. Patti</div>
<div style="position:absolute;left:802.5px;top:929px;width:60px;text-align:right;font:14px/18px 'Liberation Sans', sans-serif;color:#111;">0</div>
<div style="position:absolute;left:872.5px;top:929px;white-space:nowrap;font:14px/18px 'Liberation Sans', sans-serif;color:#111;letter-spacing:0.3px;">ACE</div>
<div style="position:absolute;left:1012px;top:929px;white-space:nowrap;font:14px/18px 'Liberation Sans', sans-serif;color:#111;letter-spacing:0px;"></div>
<div style="position:absolute;left:1113.5px;top:929px;white-space:nowrap;font:14px/18px 'Liberation Sans', sans-serif;color:#111;letter-spacing:0px;">2026-27</div>
<svg style="position:absolute;left:1200px;top:925.5px;" width="22" height="21" viewBox="0 0 22 21"><defs><linearGradient id="gck" x1="0" y1="0" x2="0" y2="1"><stop offset="0" stop-color="#8ed04e"/><stop offset="1" stop-color="#3f9a1e"/></linearGradient></defs><path d="M1 8.5 L4.5 7 L8.5 13 L19.5 1 L21 2.5 L9 20 L7.5 20z" fill="url(#gck)" stroke="#4a9a28" stroke-width="0.6"/></svg>
<svg style="position:absolute;left:1256px;top:925.5px;" width="22" height="21" viewBox="0 0 22 21"><defs><linearGradient id="gck" x1="0" y1="0" x2="0" y2="1"><stop offset="0" stop-color="#8ed04e"/><stop offset="1" stop-color="#3f9a1e"/></linearGradient></defs><path d="M1 8.5 L4.5 7 L8.5 13 L19.5 1 L21 2.5 L9 20 L7.5 20z" fill="url(#gck)" stroke="#4a9a28" stroke-width="0.6"/></svg>
<svg style="position:absolute;left:1311px;top:925.5px;" width="22" height="21" viewBox="0 0 22 21"><defs><linearGradient id="gck" x1="0" y1="0" x2="0" y2="1"><stop offset="0" stop-color="#8ed04e"/><stop offset="1" stop-color="#3f9a1e"/></linearGradient></defs><path d="M1 8.5 L4.5 7 L8.5 13 L19.5 1 L21 2.5 L9 20 L7.5 20z" fill="url(#gck)" stroke="#4a9a28" stroke-width="0.6"/></svg>
<svg style="position:absolute;left:1368px;top:925.5px;" width="22" height="21" viewBox="0 0 22 21"><defs><linearGradient id="gck" x1="0" y1="0" x2="0" y2="1"><stop offset="0" stop-color="#8ed04e"/><stop offset="1" stop-color="#3f9a1e"/></linearGradient></defs><path d="M1 8.5 L4.5 7 L8.5 13 L19.5 1 L21 2.5 L9 20 L7.5 20z" fill="url(#gck)" stroke="#4a9a28" stroke-width="0.6"/></svg>
<svg style="position:absolute;left:1423px;top:925.5px;" width="22" height="21" viewBox="0 0 22 21"><defs><linearGradient id="gck" x1="0" y1="0" x2="0" y2="1"><stop offset="0" stop-color="#8ed04e"/><stop offset="1" stop-color="#3f9a1e"/></linearGradient></defs><path d="M1 8.5 L4.5 7 L8.5 13 L19.5 1 L21 2.5 L9 20 L7.5 20z" fill="url(#gck)" stroke="#4a9a28" stroke-width="0.6"/></svg>
<svg style="position:absolute;left:1478px;top:925.5px;" width="22" height="21" viewBox="0 0 22 21"><defs><linearGradient id="gck" x1="0" y1="0" x2="0" y2="1"><stop offset="0" stop-color="#8ed04e"/><stop offset="1" stop-color="#3f9a1e"/></linearGradient></defs><path d="M1 8.5 L4.5 7 L8.5 13 L19.5 1 L21 2.5 L9 20 L7.5 20z" fill="url(#gck)" stroke="#4a9a28" stroke-width="0.6"/></svg>
<svg style="position:absolute;left:1534px;top:925.5px;" width="22" height="21" viewBox="0 0 22 21"><defs><linearGradient id="gck" x1="0" y1="0" x2="0" y2="1"><stop offset="0" stop-color="#8ed04e"/><stop offset="1" stop-color="#3f9a1e"/></linearGradient></defs><path d="M1 8.5 L4.5 7 L8.5 13 L19.5 1 L21 2.5 L9 20 L7.5 20z" fill="url(#gck)" stroke="#4a9a28" stroke-width="0.6"/></svg>
<div style="position:absolute;left:419px;top:951px;width:1160px;height:26px;background:#ffffff;"></div>
<div style="position:absolute;left:468px;top:951px;width:1px;height:26px;background:#d6d6d6;"></div>
<div style="position:absolute;left:530px;top:951px;width:1px;height:26px;background:#d6d6d6;"></div>
<div style="position:absolute;left:671px;top:951px;width:1px;height:26px;background:#d6d6d6;"></div>
<div style="position:absolute;left:811px;top:951px;width:1px;height:26px;background:#d6d6d6;"></div>
<div style="position:absolute;left:866px;top:951px;width:1px;height:26px;background:#d6d6d6;"></div>
<div style="position:absolute;left:1006px;top:951px;width:1px;height:26px;background:#d6d6d6;"></div>
<div style="position:absolute;left:1107px;top:951px;width:1px;height:26px;background:#d6d6d6;"></div>
<div style="position:absolute;left:1183px;top:951px;width:1px;height:26px;background:#d6d6d6;"></div>
<div style="position:absolute;left:1238px;top:951px;width:1px;height:26px;background:#d6d6d6;"></div>
<div style="position:absolute;left:1294px;top:951px;width:1px;height:26px;background:#d6d6d6;"></div>
<div style="position:absolute;left:1349px;top:951px;width:1px;height:26px;background:#d6d6d6;"></div>
<div style="position:absolute;left:1405px;top:951px;width:1px;height:26px;background:#d6d6d6;"></div>
<div style="position:absolute;left:1460px;top:951px;width:1px;height:26px;background:#d6d6d6;"></div>
<div style="position:absolute;left:1516px;top:951px;width:1px;height:26px;background:#d6d6d6;"></div>
<div style="position:absolute;left:1572px;top:951px;width:1px;height:26px;background:#d6d6d6;"></div>
<div style="position:absolute;left:432px;top:952px;width:26px;height:25px;box-sizing:border-box;background:#fff;border:1px solid #8c8c8c;border-bottom-color:#6e6e6e;box-shadow:inset 0 0 0 1px #a8a8a8, inset 0 0 0 2px #c4c4c4, inset 0 0 0 3px #e4e4e4;"></div>
<div style="position:absolute;left:474px;top:955px;white-space:nowrap;font:14px/18px 'Liberation Sans', sans-serif;color:#111;letter-spacing:0px;">4836</div>
<div style="position:absolute;left:536px;top:955px;white-space:nowrap;font:14px/18px 'Liberation Sans', sans-serif;color:#111;letter-spacing:0px;">.Learning Center</div>
<div style="position:absolute;left:676px;top:955px;white-space:nowrap;font:14px/18px 'Liberation Sans', sans-serif;color:#111;letter-spacing:0px;">900 - Mrs. Carnahan</div>
<div style="position:absolute;left:802.5px;top:955px;width:60px;text-align:right;font:14px/18px 'Liberation Sans', sans-serif;color:#111;">0</div>
<div style="position:absolute;left:872.5px;top:955px;white-space:nowrap;font:14px/18px 'Liberation Sans', sans-serif;color:#111;letter-spacing:0.3px;">ACE</div>
<div style="position:absolute;left:1012px;top:955px;white-space:nowrap;font:14px/18px 'Liberation Sans', sans-serif;color:#111;letter-spacing:0px;">C-109</div>
<div style="position:absolute;left:1113.5px;top:955px;white-space:nowrap;font:14px/18px 'Liberation Sans', sans-serif;color:#111;letter-spacing:0px;">2026-27</div>
<svg style="position:absolute;left:1200px;top:951.5px;" width="22" height="21" viewBox="0 0 22 21"><defs><linearGradient id="gck" x1="0" y1="0" x2="0" y2="1"><stop offset="0" stop-color="#8ed04e"/><stop offset="1" stop-color="#3f9a1e"/></linearGradient></defs><path d="M1 8.5 L4.5 7 L8.5 13 L19.5 1 L21 2.5 L9 20 L7.5 20z" fill="url(#gck)" stroke="#4a9a28" stroke-width="0.6"/></svg>
<svg style="position:absolute;left:1256px;top:951.5px;" width="22" height="21" viewBox="0 0 22 21"><defs><linearGradient id="gck" x1="0" y1="0" x2="0" y2="1"><stop offset="0" stop-color="#8ed04e"/><stop offset="1" stop-color="#3f9a1e"/></linearGradient></defs><path d="M1 8.5 L4.5 7 L8.5 13 L19.5 1 L21 2.5 L9 20 L7.5 20z" fill="url(#gck)" stroke="#4a9a28" stroke-width="0.6"/></svg>
<svg style="position:absolute;left:1311px;top:951.5px;" width="22" height="21" viewBox="0 0 22 21"><defs><linearGradient id="gck" x1="0" y1="0" x2="0" y2="1"><stop offset="0" stop-color="#8ed04e"/><stop offset="1" stop-color="#3f9a1e"/></linearGradient></defs><path d="M1 8.5 L4.5 7 L8.5 13 L19.5 1 L21 2.5 L9 20 L7.5 20z" fill="url(#gck)" stroke="#4a9a28" stroke-width="0.6"/></svg>
<svg style="position:absolute;left:1368px;top:951.5px;" width="22" height="21" viewBox="0 0 22 21"><defs><linearGradient id="gck" x1="0" y1="0" x2="0" y2="1"><stop offset="0" stop-color="#8ed04e"/><stop offset="1" stop-color="#3f9a1e"/></linearGradient></defs><path d="M1 8.5 L4.5 7 L8.5 13 L19.5 1 L21 2.5 L9 20 L7.5 20z" fill="url(#gck)" stroke="#4a9a28" stroke-width="0.6"/></svg>
<svg style="position:absolute;left:1423px;top:951.5px;" width="22" height="21" viewBox="0 0 22 21"><defs><linearGradient id="gck" x1="0" y1="0" x2="0" y2="1"><stop offset="0" stop-color="#8ed04e"/><stop offset="1" stop-color="#3f9a1e"/></linearGradient></defs><path d="M1 8.5 L4.5 7 L8.5 13 L19.5 1 L21 2.5 L9 20 L7.5 20z" fill="url(#gck)" stroke="#4a9a28" stroke-width="0.6"/></svg>
<svg style="position:absolute;left:1478px;top:951.5px;" width="22" height="21" viewBox="0 0 22 21"><defs><linearGradient id="gck" x1="0" y1="0" x2="0" y2="1"><stop offset="0" stop-color="#8ed04e"/><stop offset="1" stop-color="#3f9a1e"/></linearGradient></defs><path d="M1 8.5 L4.5 7 L8.5 13 L19.5 1 L21 2.5 L9 20 L7.5 20z" fill="url(#gck)" stroke="#4a9a28" stroke-width="0.6"/></svg>
<svg style="position:absolute;left:1537px;top:953px;" width="17" height="17" viewBox="0 0 17 17"><path d="M3 3 L14 14 M14 3 L3 14" stroke="#c9574f" stroke-width="4.4" stroke-linecap="round"/><path d="M3 3 L14 14 M14 3 L3 14" stroke="#e87470" stroke-width="2.8" stroke-linecap="round"/></svg>
<div style="position:absolute;left:419px;top:977px;width:1160px;height:26px;background:#e3e3e3;"></div>
<div style="position:absolute;left:468px;top:977px;width:1px;height:26px;background:#d6d6d6;"></div>
<div style="position:absolute;left:530px;top:977px;width:1px;height:26px;background:#d6d6d6;"></div>
<div style="position:absolute;left:671px;top:977px;width:1px;height:26px;background:#d6d6d6;"></div>
<div style="position:absolute;left:811px;top:977px;width:1px;height:26px;background:#d6d6d6;"></div>
<div style="position:absolute;left:866px;top:977px;width:1px;height:26px;background:#d6d6d6;"></div>
<div style="position:absolute;left:1006px;top:977px;width:1px;height:26px;background:#d6d6d6;"></div>
<div style="position:absolute;left:1107px;top:977px;width:1px;height:26px;background:#d6d6d6;"></div>
<div style="position:absolute;left:1183px;top:977px;width:1px;height:26px;background:#d6d6d6;"></div>
<div style="position:absolute;left:1238px;top:977px;width:1px;height:26px;background:#d6d6d6;"></div>
<div style="position:absolute;left:1294px;top:977px;width:1px;height:26px;background:#d6d6d6;"></div>
<div style="position:absolute;left:1349px;top:977px;width:1px;height:26px;background:#d6d6d6;"></div>
<div style="position:absolute;left:1405px;top:977px;width:1px;height:26px;background:#d6d6d6;"></div>
<div style="position:absolute;left:1460px;top:977px;width:1px;height:26px;background:#d6d6d6;"></div>
<div style="position:absolute;left:1516px;top:977px;width:1px;height:26px;background:#d6d6d6;"></div>
<div style="position:absolute;left:1572px;top:977px;width:1px;height:26px;background:#d6d6d6;"></div>
<div style="position:absolute;left:432px;top:978px;width:26px;height:25px;box-sizing:border-box;background:#fff;border:1px solid #8c8c8c;border-bottom-color:#6e6e6e;box-shadow:inset 0 0 0 1px #a8a8a8, inset 0 0 0 2px #c4c4c4, inset 0 0 0 3px #e4e4e4;"></div>
<div style="position:absolute;left:474px;top:981px;white-space:nowrap;font:14px/18px 'Liberation Sans', sans-serif;color:#111;letter-spacing:0px;">4659</div>
<div style="position:absolute;left:536px;top:981px;white-space:nowrap;font:14px/18px 'Liberation Sans', sans-serif;color:#111;letter-spacing:0px;">01 Bible</div>
<div style="position:absolute;left:676px;top:981px;white-space:nowrap;font:14px/18px 'Liberation Sans', sans-serif;color:#111;letter-spacing:0px;">1264 - Christine</div>
<div style="position:absolute;left:802.5px;top:981px;width:60px;text-align:right;font:14px/18px 'Liberation Sans', sans-serif;color:#111;">9</div>
<div style="position:absolute;left:872.5px;top:981px;white-space:nowrap;font:14px/18px 'Liberation Sans', sans-serif;color:#111;letter-spacing:0.3px;">E S N U</div>
<div style="position:absolute;left:1012px;top:981px;white-space:nowrap;font:14px/18px 'Liberation Sans', sans-serif;color:#111;letter-spacing:0px;"></div>
<div style="position:absolute;left:1113.5px;top:981px;white-space:nowrap;font:14px/18px 'Liberation Sans', sans-serif;color:#111;letter-spacing:0px;">2025-26</div>
<svg style="position:absolute;left:1200px;top:977.5px;" width="22" height="21" viewBox="0 0 22 21"><defs><linearGradient id="gck" x1="0" y1="0" x2="0" y2="1"><stop offset="0" stop-color="#8ed04e"/><stop offset="1" stop-color="#3f9a1e"/></linearGradient></defs><path d="M1 8.5 L4.5 7 L8.5 13 L19.5 1 L21 2.5 L9 20 L7.5 20z" fill="url(#gck)" stroke="#4a9a28" stroke-width="0.6"/></svg>
<svg style="position:absolute;left:1256px;top:977.5px;" width="22" height="21" viewBox="0 0 22 21"><defs><linearGradient id="gck" x1="0" y1="0" x2="0" y2="1"><stop offset="0" stop-color="#8ed04e"/><stop offset="1" stop-color="#3f9a1e"/></linearGradient></defs><path d="M1 8.5 L4.5 7 L8.5 13 L19.5 1 L21 2.5 L9 20 L7.5 20z" fill="url(#gck)" stroke="#4a9a28" stroke-width="0.6"/></svg>
<svg style="position:absolute;left:1311px;top:977.5px;" width="22" height="21" viewBox="0 0 22 21"><defs><linearGradient id="gck" x1="0" y1="0" x2="0" y2="1"><stop offset="0" stop-color="#8ed04e"/><stop offset="1" stop-color="#3f9a1e"/></linearGradient></defs><path d="M1 8.5 L4.5 7 L8.5 13 L19.5 1 L21 2.5 L9 20 L7.5 20z" fill="url(#gck)" stroke="#4a9a28" stroke-width="0.6"/></svg>
<svg style="position:absolute;left:1368px;top:977.5px;" width="22" height="21" viewBox="0 0 22 21"><defs><linearGradient id="gck" x1="0" y1="0" x2="0" y2="1"><stop offset="0" stop-color="#8ed04e"/><stop offset="1" stop-color="#3f9a1e"/></linearGradient></defs><path d="M1 8.5 L4.5 7 L8.5 13 L19.5 1 L21 2.5 L9 20 L7.5 20z" fill="url(#gck)" stroke="#4a9a28" stroke-width="0.6"/></svg>
<svg style="position:absolute;left:1425px;top:979px;" width="17" height="17" viewBox="0 0 17 17"><path d="M3 3 L14 14 M14 3 L3 14" stroke="#c9574f" stroke-width="4.4" stroke-linecap="round"/><path d="M3 3 L14 14 M14 3 L3 14" stroke="#e87470" stroke-width="2.8" stroke-linecap="round"/></svg>
<svg style="position:absolute;left:1481px;top:979px;" width="17" height="17" viewBox="0 0 17 17"><path d="M3 3 L14 14 M14 3 L3 14" stroke="#c9574f" stroke-width="4.4" stroke-linecap="round"/><path d="M3 3 L14 14 M14 3 L3 14" stroke="#e87470" stroke-width="2.8" stroke-linecap="round"/></svg>
<svg style="position:absolute;left:1537px;top:979px;" width="17" height="17" viewBox="0 0 17 17"><path d="M3 3 L14 14 M14 3 L3 14" stroke="#c9574f" stroke-width="4.4" stroke-linecap="round"/><path d="M3 3 L14 14 M14 3 L3 14" stroke="#e87470" stroke-width="2.8" stroke-linecap="round"/></svg>
<svg style="position:absolute;left:430px;top:110px;" width="160" height="160" viewBox="0 0 160 160"><circle cx="77.3" cy="77.3" r="66" fill="rgba(243,155,76,0.55)" stroke="#f48d3a" stroke-width="6.6"/></svg>
</body></html>
